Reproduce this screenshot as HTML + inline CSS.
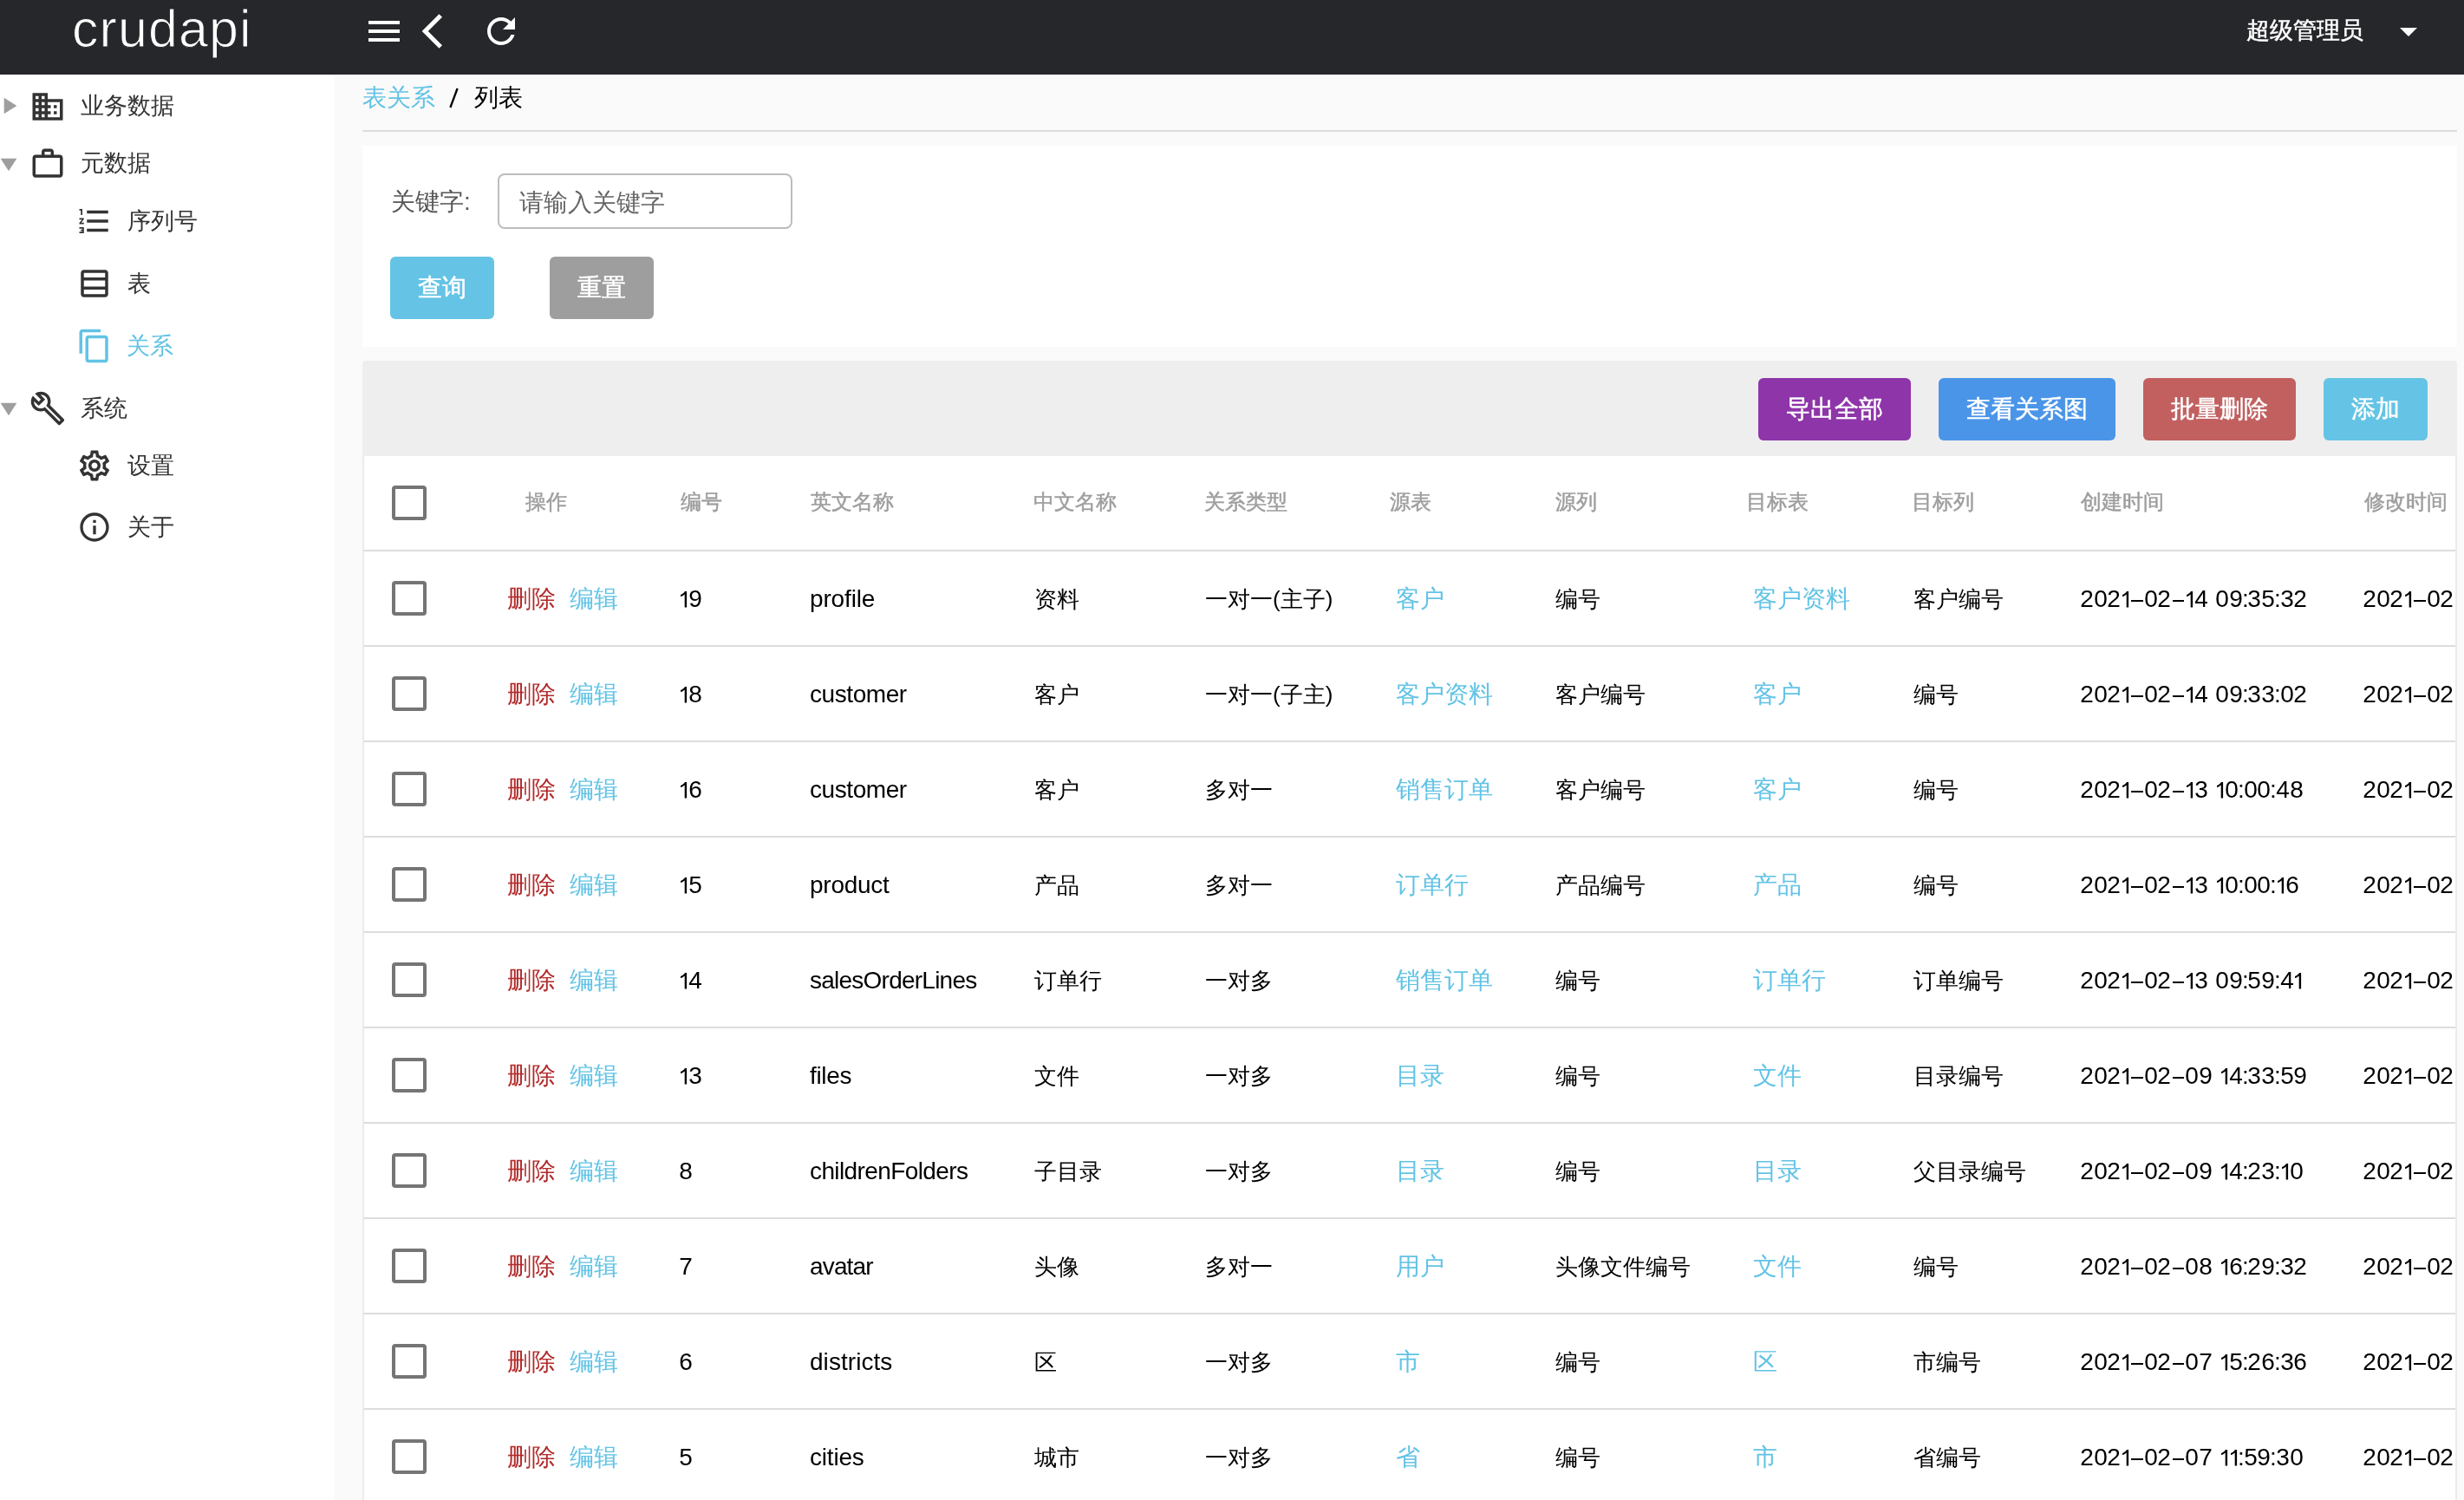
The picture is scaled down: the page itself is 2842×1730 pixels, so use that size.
<!DOCTYPE html>
<html><head><meta charset="utf-8"><style>
html,body{margin:0;padding:0;width:2842px;height:1730px;overflow:hidden;background:#fff}
body{position:relative;font-family:"Liberation Sans",sans-serif}
.t{position:absolute;white-space:nowrap;will-change:transform}
.ic{position:absolute;display:block}
.btn{position:absolute;will-change:transform;border-radius:6px;color:#fff;text-align:center;white-space:nowrap}
.cb{position:absolute;width:40px;height:40px;box-sizing:border-box;border:4px solid #757575;border-radius:4px}
</style></head><body>
<div style="position:absolute;left:0;top:0;width:2842px;height:86px;background:#26272b"></div>
<div class="t" style="left:82.5px;top:2.5px;font-size:61px;line-height:61px;color:#fff;font-weight:400;letter-spacing:1.1px;-webkit-text-stroke:1px #26272b">crudapi</div>
<svg class="ic" style="left:419px;top:12px;width:48px;height:48px" viewBox="0 0 24 24"><path fill="#fff" d="M3 18h18v-2H3v2zm0-5h18v-2H3v2zm0-7v2h18V6H3z"/></svg>
<svg class="ic" style="left:475px;top:12px;width:48px;height:48px" viewBox="0 0 24 24"><path fill="#fff" d="M17.51 3.87L15.73 2.1 5.84 12l9.9 9.9 1.77-1.77L9.38 12l8.13-8.13z"/></svg>
<svg class="ic" style="left:554px;top:12px;width:48px;height:48px" viewBox="0 0 24 24"><path fill="#fff" d="M17.65 6.35C16.2 4.9 14.21 4 12 4c-4.42 0-7.99 3.58-7.99 8s3.57 8 7.99 8c3.73 0 6.84-2.55 7.73-6h-2.08c-.82 2.33-3.04 4-5.65 4-3.31 0-6-2.69-6-6s2.69-6 6-6c1.66 0 3.14.69 4.22 1.78L13 11h7V4l-2.35 2.35z"/></svg>
<div class="t" style="left:2591px;top:22px;font-size:27px;line-height:27px;color:#fff;font-weight:400;-webkit-text-stroke:0.5px #fff">超级管理员</div>
<svg class="ic" style="left:2754px;top:12px;width:48px;height:48px" viewBox="0 0 24 24"><path fill="#fff" d="M7 10l5 5 5-5z"/></svg>
<div style="position:absolute;left:0;top:86px;width:386px;height:1644px;background:#fff"></div>
<div style="position:absolute;left:386px;top:86px;width:2456px;height:1644px;background:#fafafa"></div>
<svg class="ic" style="left:-6px;top:106px;width:32px;height:32px;transform:rotate(0deg)" viewBox="0 0 24 24"><path fill="#9e9e9e" d="M8 5v14l11-7z"/></svg>
<svg class="ic" style="left:34px;top:102px;width:42px;height:42px" viewBox="0 0 24 24"><path fill="#333333" d="M12 7V3H2v18h20V7H12zM6 19H4v-2h2v2zm0-4H4v-2h2v2zm0-4H4V9h2v2zm0-4H4V5h2v2zm4 12H8v-2h2v2zm0-4H8v-2h2v2zm0-4H8V9h2v2zm0-4H8V5h2v2zm10 12h-8v-2h2v-2h-2v-2h2v-2h-2V9h8v10zm-2-8h-2v2h2v-2zm0 4h-2v2h2v-2z"/></svg>
<div class="t" style="left:93px;top:108.35px;font-size:27.3px;line-height:27.3px;color:#333333;font-weight:400">业务数据</div>
<svg class="ic" style="left:-6px;top:172px;width:32px;height:32px;transform:rotate(90deg)" viewBox="0 0 24 24"><path fill="#9e9e9e" d="M8 5v14l11-7z"/></svg>
<svg class="ic" style="left:34px;top:168px;width:42px;height:42px" viewBox="0 0 24 24"><path fill="#333333" d="M14 6V4h-4v2h4zM4 8v11h16V8H4zm16-2c1.11 0 2 .89 2 2v11c0 1.11-.89 2-2 2H4c-1.11 0-2-.89-2-2l.01-11c0-1.11.88-2 1.99-2h4V4c0-1.11.89-2 2-2h4c1.11 0 2 .89 2 2v2h4z"/></svg>
<div class="t" style="left:93px;top:174.35px;font-size:27.3px;line-height:27.3px;color:#333333;font-weight:400">元数据</div>
<svg class="ic" style="left:88px;top:234px;width:42px;height:42px" viewBox="0 0 24 24"><path fill="#333333" d="M2 17h2v.5H3v1h1v.5H2v1h3v-4H2v1zm1-9h1V4H2v1h1v3zm-1 3h1.8L2 13.1v.9h3v-1H3.2L5 10.9V10H2v1zm5-6v2h14V5H7zm0 14h14v-2H7v2zm0-6h14v-2H7v2z"/></svg>
<div class="t" style="left:147px;top:241.35px;font-size:27.3px;line-height:27.3px;color:#333333;font-weight:400">序列号</div>
<svg class="ic" style="left:88px;top:305.5px;width:42px;height:42px" viewBox="0 0 24 24"><path fill="#333333" d="M19 3H5c-1.1 0-2 .9-2 2v14c0 1.1.9 2 2 2h14c1.1 0 2-.9 2-2V5c0-1.1-.9-2-2-2zm0 2v3H5V5h14zm0 5v4H5v-4h14zM5 19v-3h14v3H5z"/></svg>
<div class="t" style="left:147px;top:312.85px;font-size:27.3px;line-height:27.3px;color:#333333;font-weight:400">表</div>
<svg class="ic" style="left:88px;top:377.5px;width:42px;height:42px" viewBox="0 0 24 24"><path fill="#62c3e5" d="M16 1H4c-1.1 0-2 .9-2 2v14h2V3h12V1zm3 4H8c-1.1 0-2 .9-2 2v14c0 1.1.9 2 2 2h11c1.1 0 2-.9 2-2V7c0-1.1-.9-2-2-2zm0 16H8V7h11v14z"/></svg>
<div class="t" style="left:146px;top:384.85px;font-size:27.3px;line-height:27.3px;color:#62c3e5;font-weight:400">关系</div>
<svg class="ic" style="left:-6px;top:453.8px;width:32px;height:32px;transform:rotate(90deg)" viewBox="0 0 24 24"><path fill="#9e9e9e" d="M8 5v14l11-7z"/></svg>
<svg class="ic" style="left:34px;top:449.5px;width:42px;height:42px" viewBox="0 0 24 24"><path fill="#333333" d="M22.61 18.99l-9.08-9.08c.93-2.34.45-5.1-1.44-7C9.79.61 6.21.4 3.66 2.26L7.5 6.11 6.08 7.52 2.25 3.69C.39 6.23.6 9.82 2.9 12.11c1.86 1.86 4.57 2.35 6.89 1.48l9.11 9.11c.39.39 1.02.39 1.41 0l2.3-2.3c.4-.38.4-1.01 0-1.41zm-3 1.6l-9.46-9.46c-.61.45-1.29.72-2 .82-1.36.2-2.79-.21-3.83-1.25C3.37 9.76 2.93 8.5 3 7.26l3.09 3.09 4.24-4.24-3.08-3.09c1.24-.07 2.49.37 3.44 1.31 1.08 1.08 1.49 2.57 1.24 3.960-.12.71-.42 1.37-.88 1.96l9.45 9.45-.88.89z"/></svg>
<div class="t" style="left:93px;top:456.85px;font-size:27.3px;line-height:27.3px;color:#333333;font-weight:400">系统</div>
<svg class="ic" style="left:88px;top:515.5px;width:42px;height:42px" viewBox="0 0 24 24"><path fill="#333333" d="M19.43 12.98c.04-.32.07-.64.07-.98 0-.34-.03-.66-.07-.98l2.11-1.65c.19-.15.24-.42.12-.64l-2-3.46c-.09-.16-.26-.25-.44-.25-.06 0-.12.01-.17.03l-2.49 1c-.52-.4-1.08-.73-1.69-.98l-.38-2.650C14.46 2.18 14.25 2 14 2h-4c-.25 0-.46.18-.49.42l-.38 2.65c-.61.25-1.17.59-1.69.98l-2.49-1c-.06-.02-.12-.03-.18-.03-.17 0-.34.09-.43.25l-2 3.46c-.13.22-.07.49.12.64l2.11 1.65c-.04.32-.07.65-.07.98 0 .33.03.66.07.98l-2.11 1.65c-.19.15-.24.42-.12.64l2 3.46c.09.16.26.25.44.25.06 0 .12-.01.17-.03l2.49-1c.52.4 1.08.73 1.69.98l.38 2.65c.03.24.24.42.49.42h4c.25 0 .46-.18.49-.42l.38-2.65c.61-.25 1.17-.59 1.69-.98l2.49 1c.06.02.12.03.18.03.17 0 .34-.09.43-.25l2-3.46c.12-.22.07-.49-.12-.64l-2.11-1.65zm-1.98-1.71c.04.31.05.52.05.73 0 .21-.02.43-.05.73l-.14 1.13.89.7 1.08.84-.7 1.21-1.27-.51-1.04-.42-.9.68c-.43.32-.84.56-1.25.73l-1.06.43-.16 1.13-.2 1.35h-1.4l-.19-1.35-.16-1.13-1.06-.43c-.43-.18-.83-.41-1.23-.71l-.91-.7-1.06.43-1.27.51-.7-1.21 1.08-.84.89-.7-.14-1.13c-.03-.31-.05-.54-.05-.74s.02-.43.05-.73l.14-1.13-.89-.7-1.08-.84.7-1.21 1.27.51 1.04.42.9-.68c.43-.32.84-.56 1.25-.73l1.06-.43.16-1.13.2-1.35h1.39l.19 1.35.16 1.13 1.06.43c.43.18.83.41 1.23.71l.91.7 1.06-.43 1.27-.51.7 1.21-1.07.85-.89.7.14 1.13zM12 8c-2.21 0-4 1.790-4 4s1.79 4 4 4 4-1.79 4-4-1.79-4-4-4zm0 6c-1.1 0-2-.9-2-2s.9-2 2-2 2 .9 2 2-.9 2-2 2z"/></svg>
<div class="t" style="left:147px;top:522.85px;font-size:27.3px;line-height:27.3px;color:#333333;font-weight:400">设置</div>
<svg class="ic" style="left:89px;top:588px;width:40px;height:40px" viewBox="0 0 24 24"><path fill="#333333" d="M11 7h2v2h-2zm0 4h2v6h-2zm1-9C6.48 2 2 6.48 2 12s4.48 10 10 10 10-4.48 10-10S17.52 2 12 2zm0 18c-4.41 0-8-3.59-8-8s3.59-8 8-8 8 3.59 8 8-3.59 8-8 8z"/></svg>
<div class="t" style="left:147px;top:594.35px;font-size:27.3px;line-height:27.3px;color:#333333;font-weight:400">关于</div>
<div class="t" style="left:418px;top:99px;font-size:27.6px;line-height:27.6px;color:#62c3e5;font-weight:400">表关系</div>
<svg style="position:absolute;left:510px;top:95px;width:30px;height:35px" viewBox="510 95 30 35"><line x1="519.4" y1="124" x2="527.6" y2="102" stroke="#000" stroke-width="2.3"/></svg>
<div class="t" style="left:547px;top:99px;font-size:27.6px;line-height:27.6px;color:#000;font-weight:400">列表</div>
<div style="position:absolute;left:418px;top:150px;width:2416px;height:2px;background:#dddddd"></div>
<div style="position:absolute;left:418px;top:168px;width:2416px;height:232px;background:#fff"></div>
<div class="t" style="left:451px;top:219px;font-size:28px;line-height:28px;color:#555555;font-weight:400">关键字:</div>
<div style="position:absolute;left:574px;top:200px;width:340px;height:64px;box-sizing:border-box;border:2px solid #bdbdbd;border-radius:8px;background:#fff"></div>
<div class="t" style="left:599px;top:220px;font-size:28px;line-height:28px;color:#666666;font-weight:400">请输入关键字</div>
<div class="btn" style="left:450px;top:296px;width:120px;height:72px;background:#65c4e5;line-height:72px;font-size:28px;-webkit-text-stroke:0.5px #fff"><span style="position:relative;top:0px">查询</span></div>
<div class="btn" style="left:634px;top:296px;width:120px;height:72px;background:#9e9e9e;line-height:72px;font-size:28px;-webkit-text-stroke:0.5px #fff"><span style="position:relative;top:0px">重置</span></div>
<div style="position:absolute;left:418px;top:416px;width:2416px;height:110px;background:#eeeeee;border-radius:4px 4px 0 0"></div>
<div class="btn" style="left:2028px;top:436px;width:176px;height:72px;background:#8e35a9;line-height:72px;font-size:28px;-webkit-text-stroke:0.5px #fff"><span style="position:relative;top:0px">导出全部</span></div>
<div class="btn" style="left:2236px;top:436px;width:204px;height:72px;background:#4a95e8;line-height:72px;font-size:28px;-webkit-text-stroke:0.5px #fff"><span style="position:relative;top:0px">查看关系图</span></div>
<div class="btn" style="left:2472px;top:436px;width:176px;height:72px;background:#c26060;line-height:72px;font-size:28px;-webkit-text-stroke:0.5px #fff"><span style="position:relative;top:0px">批量删除</span></div>
<div class="btn" style="left:2680px;top:436px;width:120px;height:72px;background:#65c4e5;line-height:72px;font-size:28px;-webkit-text-stroke:0.5px #fff"><span style="position:relative;top:0px">添加</span></div>
<div style="position:absolute;left:418px;top:526px;width:2416px;height:1204px;background:#fff;overflow:hidden;box-sizing:border-box;border-left:2px solid #ebebeb;border-right:2px solid #ebebeb"><div id="tbl" style="position:absolute;left:-420px;top:-526px;width:2842px;height:1730px">
<div class="cb" style="left:452px;top:560px"></div>
<div class="t" style="left:606px;top:568.25px;font-size:23.5px;line-height:23.5px;color:#9e9e9e;font-weight:400;-webkit-text-stroke:0.5px #9e9e9e">操作</div>
<div class="t" style="left:785px;top:568.25px;font-size:23.5px;line-height:23.5px;color:#9e9e9e;font-weight:400;-webkit-text-stroke:0.5px #9e9e9e">编号</div>
<div class="t" style="left:935px;top:568.25px;font-size:23.5px;line-height:23.5px;color:#9e9e9e;font-weight:400;-webkit-text-stroke:0.5px #9e9e9e">英文名称</div>
<div class="t" style="left:1192px;top:568.25px;font-size:23.5px;line-height:23.5px;color:#9e9e9e;font-weight:400;-webkit-text-stroke:0.5px #9e9e9e">中文名称</div>
<div class="t" style="left:1389px;top:568.25px;font-size:23.5px;line-height:23.5px;color:#9e9e9e;font-weight:400;-webkit-text-stroke:0.5px #9e9e9e">关系类型</div>
<div class="t" style="left:1603px;top:568.25px;font-size:23.5px;line-height:23.5px;color:#9e9e9e;font-weight:400;-webkit-text-stroke:0.5px #9e9e9e">源表</div>
<div class="t" style="left:1794px;top:568.25px;font-size:23.5px;line-height:23.5px;color:#9e9e9e;font-weight:400;-webkit-text-stroke:0.5px #9e9e9e">源列</div>
<div class="t" style="left:2014px;top:568.25px;font-size:23.5px;line-height:23.5px;color:#9e9e9e;font-weight:400;-webkit-text-stroke:0.5px #9e9e9e">目标表</div>
<div class="t" style="left:2205px;top:568.25px;font-size:23.5px;line-height:23.5px;color:#9e9e9e;font-weight:400;-webkit-text-stroke:0.5px #9e9e9e">目标列</div>
<div class="t" style="left:2400px;top:568.25px;font-size:23.5px;line-height:23.5px;color:#9e9e9e;font-weight:400;-webkit-text-stroke:0.5px #9e9e9e">创建时间</div>
<div class="t" style="left:2727px;top:568.25px;font-size:23.5px;line-height:23.5px;color:#9e9e9e;font-weight:400;-webkit-text-stroke:0.5px #9e9e9e">修改时间</div>
<div style="position:absolute;left:418px;top:634px;width:2416px;height:2px;background:#dddddd"></div>
<div class="cb" style="left:452px;top:670px"></div>
<div class="t" style="left:585px;top:677px;font-size:28px;line-height:28px;color:#b22a2a;font-weight:400">删除</div>
<div class="t" style="left:657px;top:677px;font-size:28px;line-height:28px;color:#62c3e5;font-weight:400">编辑</div>
<svg style="position:absolute;left:785.46px;top:681.80px;width:7.3px;height:18.4px;overflow:visible" viewBox="0 0 7.3 18.4"><path fill="#000000" d="M7.1 0H5C4 1.9 2.4 3.1 0 3.9V6C1.9 5.5 3.4 4.6 4.7 3.4V18.4H7.1Z"/></svg>
<div class="t" style="left:782.26px;width:40px;text-align:center;top:677px;font-size:28px;line-height:28px;color:#000000">9</div>
<div class="t" style="left:933.5px;top:677px;font-size:28px;line-height:28px;color:#000000;font-weight:400;letter-spacing:-0.15px">profile</div>
<div class="t" style="left:1193px;top:678px;font-size:26px;line-height:26px;color:#000000;font-weight:400">资料</div>
<div class="t" style="left:1390px;top:678px;font-size:26px;line-height:26px;color:#000000;font-weight:400">一对一(主子)</div>
<div class="t" style="left:1610px;top:677px;font-size:28px;line-height:28px;color:#62c3e5;font-weight:400">客户</div>
<div class="t" style="left:1794px;top:678px;font-size:26px;line-height:26px;color:#000000;font-weight:400">编号</div>
<div class="t" style="left:2022px;top:677px;font-size:28px;line-height:28px;color:#62c3e5;font-weight:400">客户资料</div>
<div class="t" style="left:2207px;top:678px;font-size:26px;line-height:26px;color:#000000;font-weight:400">客户编号</div>
<div class="t" style="left:2387.43px;width:40px;text-align:center;top:677px;font-size:28px;line-height:28px;color:#000000">2</div>
<div class="t" style="left:2402.90px;width:40px;text-align:center;top:677px;font-size:28px;line-height:28px;color:#000000">0</div>
<div class="t" style="left:2418.37px;width:40px;text-align:center;top:677px;font-size:28px;line-height:28px;color:#000000">2</div>
<svg style="position:absolute;left:2447.87px;top:681.80px;width:7.3px;height:18.4px;overflow:visible" viewBox="0 0 7.3 18.4"><path fill="#000000" d="M7.1 0H5C4 1.9 2.4 3.1 0 3.9V6C1.9 5.5 3.4 4.6 4.7 3.4V18.4H7.1Z"/></svg>
<div style="position:absolute;left:2458.38px;top:692.40px;width:13.4px;height:1.8px;background:#000000"></div>
<div class="t" style="left:2460.96px;width:40px;text-align:center;top:677px;font-size:28px;line-height:28px;color:#000000">0</div>
<div class="t" style="left:2476.43px;width:40px;text-align:center;top:677px;font-size:28px;line-height:28px;color:#000000">2</div>
<div style="position:absolute;left:2505.62px;top:692.40px;width:13.4px;height:1.8px;background:#000000"></div>
<svg style="position:absolute;left:2522.23px;top:681.80px;width:7.3px;height:18.4px;overflow:visible" viewBox="0 0 7.3 18.4"><path fill="#000000" d="M7.1 0H5C4 1.9 2.4 3.1 0 3.9V6C1.9 5.5 3.4 4.6 4.7 3.4V18.4H7.1Z"/></svg>
<div class="t" style="left:2519.02px;width:40px;text-align:center;top:677px;font-size:28px;line-height:28px;color:#000000">4</div>
<div class="t" style="left:2543.04px;width:40px;text-align:center;top:677px;font-size:28px;line-height:28px;color:#000000">0</div>
<div class="t" style="left:2558.51px;width:40px;text-align:center;top:677px;font-size:28px;line-height:28px;color:#000000">9</div>
<div class="t" style="left:2569.50px;width:40px;text-align:center;top:677px;font-size:28px;line-height:28px;color:#000000">:</div>
<div class="t" style="left:2580.48px;width:40px;text-align:center;top:677px;font-size:28px;line-height:28px;color:#000000">3</div>
<div class="t" style="left:2595.95px;width:40px;text-align:center;top:677px;font-size:28px;line-height:28px;color:#000000">5</div>
<div class="t" style="left:2606.94px;width:40px;text-align:center;top:677px;font-size:28px;line-height:28px;color:#000000">:</div>
<div class="t" style="left:2617.92px;width:40px;text-align:center;top:677px;font-size:28px;line-height:28px;color:#000000">3</div>
<div class="t" style="left:2633.39px;width:40px;text-align:center;top:677px;font-size:28px;line-height:28px;color:#000000">2</div>
<div class="t" style="left:2713.43px;width:40px;text-align:center;top:677px;font-size:28px;line-height:28px;color:#000000">2</div>
<div class="t" style="left:2728.90px;width:40px;text-align:center;top:677px;font-size:28px;line-height:28px;color:#000000">0</div>
<div class="t" style="left:2744.37px;width:40px;text-align:center;top:677px;font-size:28px;line-height:28px;color:#000000">2</div>
<svg style="position:absolute;left:2773.87px;top:681.80px;width:7.3px;height:18.4px;overflow:visible" viewBox="0 0 7.3 18.4"><path fill="#000000" d="M7.1 0H5C4 1.9 2.4 3.1 0 3.9V6C1.9 5.5 3.4 4.6 4.7 3.4V18.4H7.1Z"/></svg>
<div style="position:absolute;left:2784.38px;top:692.40px;width:13.4px;height:1.8px;background:#000000"></div>
<div class="t" style="left:2786.96px;width:40px;text-align:center;top:677px;font-size:28px;line-height:28px;color:#000000">0</div>
<div class="t" style="left:2802.43px;width:40px;text-align:center;top:677px;font-size:28px;line-height:28px;color:#000000">2</div>
<div style="position:absolute;left:2831.62px;top:692.40px;width:13.4px;height:1.8px;background:#000000"></div>
<svg style="position:absolute;left:2848.23px;top:681.80px;width:7.3px;height:18.4px;overflow:visible" viewBox="0 0 7.3 18.4"><path fill="#000000" d="M7.1 0H5C4 1.9 2.4 3.1 0 3.9V6C1.9 5.5 3.4 4.6 4.7 3.4V18.4H7.1Z"/></svg>
<div class="t" style="left:2845.02px;width:40px;text-align:center;top:677px;font-size:28px;line-height:28px;color:#000000">4</div>
<div class="t" style="left:2869.04px;width:40px;text-align:center;top:677px;font-size:28px;line-height:28px;color:#000000">0</div>
<div class="t" style="left:2884.51px;width:40px;text-align:center;top:677px;font-size:28px;line-height:28px;color:#000000">9</div>
<div class="t" style="left:2895.50px;width:40px;text-align:center;top:677px;font-size:28px;line-height:28px;color:#000000">:</div>
<div class="t" style="left:2906.48px;width:40px;text-align:center;top:677px;font-size:28px;line-height:28px;color:#000000">3</div>
<div class="t" style="left:2921.95px;width:40px;text-align:center;top:677px;font-size:28px;line-height:28px;color:#000000">5</div>
<div class="t" style="left:2932.94px;width:40px;text-align:center;top:677px;font-size:28px;line-height:28px;color:#000000">:</div>
<div class="t" style="left:2943.92px;width:40px;text-align:center;top:677px;font-size:28px;line-height:28px;color:#000000">3</div>
<div class="t" style="left:2959.39px;width:40px;text-align:center;top:677px;font-size:28px;line-height:28px;color:#000000">2</div>
<div style="position:absolute;left:418px;top:744px;width:2416px;height:2px;background:#dddddd"></div>
<div class="cb" style="left:452px;top:780px"></div>
<div class="t" style="left:585px;top:787px;font-size:28px;line-height:28px;color:#b22a2a;font-weight:400">删除</div>
<div class="t" style="left:657px;top:787px;font-size:28px;line-height:28px;color:#62c3e5;font-weight:400">编辑</div>
<svg style="position:absolute;left:785.46px;top:791.80px;width:7.3px;height:18.4px;overflow:visible" viewBox="0 0 7.3 18.4"><path fill="#000000" d="M7.1 0H5C4 1.9 2.4 3.1 0 3.9V6C1.9 5.5 3.4 4.6 4.7 3.4V18.4H7.1Z"/></svg>
<div class="t" style="left:782.26px;width:40px;text-align:center;top:787px;font-size:28px;line-height:28px;color:#000000">8</div>
<div class="t" style="left:933.5px;top:787px;font-size:28px;line-height:28px;color:#000000;font-weight:400;letter-spacing:-0.43px">customer</div>
<div class="t" style="left:1193px;top:788px;font-size:26px;line-height:26px;color:#000000;font-weight:400">客户</div>
<div class="t" style="left:1390px;top:788px;font-size:26px;line-height:26px;color:#000000;font-weight:400">一对一(子主)</div>
<div class="t" style="left:1610px;top:787px;font-size:28px;line-height:28px;color:#62c3e5;font-weight:400">客户资料</div>
<div class="t" style="left:1794px;top:788px;font-size:26px;line-height:26px;color:#000000;font-weight:400">客户编号</div>
<div class="t" style="left:2022px;top:787px;font-size:28px;line-height:28px;color:#62c3e5;font-weight:400">客户</div>
<div class="t" style="left:2207px;top:788px;font-size:26px;line-height:26px;color:#000000;font-weight:400">编号</div>
<div class="t" style="left:2387.43px;width:40px;text-align:center;top:787px;font-size:28px;line-height:28px;color:#000000">2</div>
<div class="t" style="left:2402.90px;width:40px;text-align:center;top:787px;font-size:28px;line-height:28px;color:#000000">0</div>
<div class="t" style="left:2418.37px;width:40px;text-align:center;top:787px;font-size:28px;line-height:28px;color:#000000">2</div>
<svg style="position:absolute;left:2447.87px;top:791.80px;width:7.3px;height:18.4px;overflow:visible" viewBox="0 0 7.3 18.4"><path fill="#000000" d="M7.1 0H5C4 1.9 2.4 3.1 0 3.9V6C1.9 5.5 3.4 4.6 4.7 3.4V18.4H7.1Z"/></svg>
<div style="position:absolute;left:2458.38px;top:802.40px;width:13.4px;height:1.8px;background:#000000"></div>
<div class="t" style="left:2460.96px;width:40px;text-align:center;top:787px;font-size:28px;line-height:28px;color:#000000">0</div>
<div class="t" style="left:2476.43px;width:40px;text-align:center;top:787px;font-size:28px;line-height:28px;color:#000000">2</div>
<div style="position:absolute;left:2505.62px;top:802.40px;width:13.4px;height:1.8px;background:#000000"></div>
<svg style="position:absolute;left:2522.23px;top:791.80px;width:7.3px;height:18.4px;overflow:visible" viewBox="0 0 7.3 18.4"><path fill="#000000" d="M7.1 0H5C4 1.9 2.4 3.1 0 3.9V6C1.9 5.5 3.4 4.6 4.7 3.4V18.4H7.1Z"/></svg>
<div class="t" style="left:2519.02px;width:40px;text-align:center;top:787px;font-size:28px;line-height:28px;color:#000000">4</div>
<div class="t" style="left:2543.04px;width:40px;text-align:center;top:787px;font-size:28px;line-height:28px;color:#000000">0</div>
<div class="t" style="left:2558.51px;width:40px;text-align:center;top:787px;font-size:28px;line-height:28px;color:#000000">9</div>
<div class="t" style="left:2569.50px;width:40px;text-align:center;top:787px;font-size:28px;line-height:28px;color:#000000">:</div>
<div class="t" style="left:2580.48px;width:40px;text-align:center;top:787px;font-size:28px;line-height:28px;color:#000000">3</div>
<div class="t" style="left:2595.95px;width:40px;text-align:center;top:787px;font-size:28px;line-height:28px;color:#000000">3</div>
<div class="t" style="left:2606.94px;width:40px;text-align:center;top:787px;font-size:28px;line-height:28px;color:#000000">:</div>
<div class="t" style="left:2617.92px;width:40px;text-align:center;top:787px;font-size:28px;line-height:28px;color:#000000">0</div>
<div class="t" style="left:2633.39px;width:40px;text-align:center;top:787px;font-size:28px;line-height:28px;color:#000000">2</div>
<div class="t" style="left:2713.43px;width:40px;text-align:center;top:787px;font-size:28px;line-height:28px;color:#000000">2</div>
<div class="t" style="left:2728.90px;width:40px;text-align:center;top:787px;font-size:28px;line-height:28px;color:#000000">0</div>
<div class="t" style="left:2744.37px;width:40px;text-align:center;top:787px;font-size:28px;line-height:28px;color:#000000">2</div>
<svg style="position:absolute;left:2773.87px;top:791.80px;width:7.3px;height:18.4px;overflow:visible" viewBox="0 0 7.3 18.4"><path fill="#000000" d="M7.1 0H5C4 1.9 2.4 3.1 0 3.9V6C1.9 5.5 3.4 4.6 4.7 3.4V18.4H7.1Z"/></svg>
<div style="position:absolute;left:2784.38px;top:802.40px;width:13.4px;height:1.8px;background:#000000"></div>
<div class="t" style="left:2786.96px;width:40px;text-align:center;top:787px;font-size:28px;line-height:28px;color:#000000">0</div>
<div class="t" style="left:2802.43px;width:40px;text-align:center;top:787px;font-size:28px;line-height:28px;color:#000000">2</div>
<div style="position:absolute;left:2831.62px;top:802.40px;width:13.4px;height:1.8px;background:#000000"></div>
<svg style="position:absolute;left:2848.23px;top:791.80px;width:7.3px;height:18.4px;overflow:visible" viewBox="0 0 7.3 18.4"><path fill="#000000" d="M7.1 0H5C4 1.9 2.4 3.1 0 3.9V6C1.9 5.5 3.4 4.6 4.7 3.4V18.4H7.1Z"/></svg>
<div class="t" style="left:2845.02px;width:40px;text-align:center;top:787px;font-size:28px;line-height:28px;color:#000000">4</div>
<div class="t" style="left:2869.04px;width:40px;text-align:center;top:787px;font-size:28px;line-height:28px;color:#000000">0</div>
<div class="t" style="left:2884.51px;width:40px;text-align:center;top:787px;font-size:28px;line-height:28px;color:#000000">9</div>
<div class="t" style="left:2895.50px;width:40px;text-align:center;top:787px;font-size:28px;line-height:28px;color:#000000">:</div>
<div class="t" style="left:2906.48px;width:40px;text-align:center;top:787px;font-size:28px;line-height:28px;color:#000000">3</div>
<div class="t" style="left:2921.95px;width:40px;text-align:center;top:787px;font-size:28px;line-height:28px;color:#000000">3</div>
<div class="t" style="left:2932.94px;width:40px;text-align:center;top:787px;font-size:28px;line-height:28px;color:#000000">:</div>
<div class="t" style="left:2943.92px;width:40px;text-align:center;top:787px;font-size:28px;line-height:28px;color:#000000">0</div>
<div class="t" style="left:2959.39px;width:40px;text-align:center;top:787px;font-size:28px;line-height:28px;color:#000000">2</div>
<div style="position:absolute;left:418px;top:854px;width:2416px;height:2px;background:#dddddd"></div>
<div class="cb" style="left:452px;top:890px"></div>
<div class="t" style="left:585px;top:897px;font-size:28px;line-height:28px;color:#b22a2a;font-weight:400">删除</div>
<div class="t" style="left:657px;top:897px;font-size:28px;line-height:28px;color:#62c3e5;font-weight:400">编辑</div>
<svg style="position:absolute;left:785.46px;top:901.80px;width:7.3px;height:18.4px;overflow:visible" viewBox="0 0 7.3 18.4"><path fill="#000000" d="M7.1 0H5C4 1.9 2.4 3.1 0 3.9V6C1.9 5.5 3.4 4.6 4.7 3.4V18.4H7.1Z"/></svg>
<div class="t" style="left:782.26px;width:40px;text-align:center;top:897px;font-size:28px;line-height:28px;color:#000000">6</div>
<div class="t" style="left:933.5px;top:897px;font-size:28px;line-height:28px;color:#000000;font-weight:400;letter-spacing:-0.43px">customer</div>
<div class="t" style="left:1193px;top:898px;font-size:26px;line-height:26px;color:#000000;font-weight:400">客户</div>
<div class="t" style="left:1390px;top:898px;font-size:26px;line-height:26px;color:#000000;font-weight:400">多对一</div>
<div class="t" style="left:1610px;top:897px;font-size:28px;line-height:28px;color:#62c3e5;font-weight:400">销售订单</div>
<div class="t" style="left:1794px;top:898px;font-size:26px;line-height:26px;color:#000000;font-weight:400">客户编号</div>
<div class="t" style="left:2022px;top:897px;font-size:28px;line-height:28px;color:#62c3e5;font-weight:400">客户</div>
<div class="t" style="left:2207px;top:898px;font-size:26px;line-height:26px;color:#000000;font-weight:400">编号</div>
<div class="t" style="left:2387.43px;width:40px;text-align:center;top:897px;font-size:28px;line-height:28px;color:#000000">2</div>
<div class="t" style="left:2402.90px;width:40px;text-align:center;top:897px;font-size:28px;line-height:28px;color:#000000">0</div>
<div class="t" style="left:2418.37px;width:40px;text-align:center;top:897px;font-size:28px;line-height:28px;color:#000000">2</div>
<svg style="position:absolute;left:2447.87px;top:901.80px;width:7.3px;height:18.4px;overflow:visible" viewBox="0 0 7.3 18.4"><path fill="#000000" d="M7.1 0H5C4 1.9 2.4 3.1 0 3.9V6C1.9 5.5 3.4 4.6 4.7 3.4V18.4H7.1Z"/></svg>
<div style="position:absolute;left:2458.38px;top:912.40px;width:13.4px;height:1.8px;background:#000000"></div>
<div class="t" style="left:2460.96px;width:40px;text-align:center;top:897px;font-size:28px;line-height:28px;color:#000000">0</div>
<div class="t" style="left:2476.43px;width:40px;text-align:center;top:897px;font-size:28px;line-height:28px;color:#000000">2</div>
<div style="position:absolute;left:2505.62px;top:912.40px;width:13.4px;height:1.8px;background:#000000"></div>
<svg style="position:absolute;left:2522.23px;top:901.80px;width:7.3px;height:18.4px;overflow:visible" viewBox="0 0 7.3 18.4"><path fill="#000000" d="M7.1 0H5C4 1.9 2.4 3.1 0 3.9V6C1.9 5.5 3.4 4.6 4.7 3.4V18.4H7.1Z"/></svg>
<div class="t" style="left:2519.02px;width:40px;text-align:center;top:897px;font-size:28px;line-height:28px;color:#000000">3</div>
<svg style="position:absolute;left:2557.07px;top:901.80px;width:7.3px;height:18.4px;overflow:visible" viewBox="0 0 7.3 18.4"><path fill="#000000" d="M7.1 0H5C4 1.9 2.4 3.1 0 3.9V6C1.9 5.5 3.4 4.6 4.7 3.4V18.4H7.1Z"/></svg>
<div class="t" style="left:2553.86px;width:40px;text-align:center;top:897px;font-size:28px;line-height:28px;color:#000000">0</div>
<div class="t" style="left:2564.85px;width:40px;text-align:center;top:897px;font-size:28px;line-height:28px;color:#000000">:</div>
<div class="t" style="left:2575.83px;width:40px;text-align:center;top:897px;font-size:28px;line-height:28px;color:#000000">0</div>
<div class="t" style="left:2591.30px;width:40px;text-align:center;top:897px;font-size:28px;line-height:28px;color:#000000">0</div>
<div class="t" style="left:2602.29px;width:40px;text-align:center;top:897px;font-size:28px;line-height:28px;color:#000000">:</div>
<div class="t" style="left:2613.27px;width:40px;text-align:center;top:897px;font-size:28px;line-height:28px;color:#000000">4</div>
<div class="t" style="left:2628.74px;width:40px;text-align:center;top:897px;font-size:28px;line-height:28px;color:#000000">8</div>
<div class="t" style="left:2713.43px;width:40px;text-align:center;top:897px;font-size:28px;line-height:28px;color:#000000">2</div>
<div class="t" style="left:2728.90px;width:40px;text-align:center;top:897px;font-size:28px;line-height:28px;color:#000000">0</div>
<div class="t" style="left:2744.37px;width:40px;text-align:center;top:897px;font-size:28px;line-height:28px;color:#000000">2</div>
<svg style="position:absolute;left:2773.87px;top:901.80px;width:7.3px;height:18.4px;overflow:visible" viewBox="0 0 7.3 18.4"><path fill="#000000" d="M7.1 0H5C4 1.9 2.4 3.1 0 3.9V6C1.9 5.5 3.4 4.6 4.7 3.4V18.4H7.1Z"/></svg>
<div style="position:absolute;left:2784.38px;top:912.40px;width:13.4px;height:1.8px;background:#000000"></div>
<div class="t" style="left:2786.96px;width:40px;text-align:center;top:897px;font-size:28px;line-height:28px;color:#000000">0</div>
<div class="t" style="left:2802.43px;width:40px;text-align:center;top:897px;font-size:28px;line-height:28px;color:#000000">2</div>
<div style="position:absolute;left:2831.62px;top:912.40px;width:13.4px;height:1.8px;background:#000000"></div>
<svg style="position:absolute;left:2848.23px;top:901.80px;width:7.3px;height:18.4px;overflow:visible" viewBox="0 0 7.3 18.4"><path fill="#000000" d="M7.1 0H5C4 1.9 2.4 3.1 0 3.9V6C1.9 5.5 3.4 4.6 4.7 3.4V18.4H7.1Z"/></svg>
<div class="t" style="left:2845.02px;width:40px;text-align:center;top:897px;font-size:28px;line-height:28px;color:#000000">3</div>
<svg style="position:absolute;left:2883.07px;top:901.80px;width:7.3px;height:18.4px;overflow:visible" viewBox="0 0 7.3 18.4"><path fill="#000000" d="M7.1 0H5C4 1.9 2.4 3.1 0 3.9V6C1.9 5.5 3.4 4.6 4.7 3.4V18.4H7.1Z"/></svg>
<div class="t" style="left:2879.86px;width:40px;text-align:center;top:897px;font-size:28px;line-height:28px;color:#000000">0</div>
<div class="t" style="left:2890.85px;width:40px;text-align:center;top:897px;font-size:28px;line-height:28px;color:#000000">:</div>
<div class="t" style="left:2901.83px;width:40px;text-align:center;top:897px;font-size:28px;line-height:28px;color:#000000">0</div>
<div class="t" style="left:2917.30px;width:40px;text-align:center;top:897px;font-size:28px;line-height:28px;color:#000000">0</div>
<div class="t" style="left:2928.29px;width:40px;text-align:center;top:897px;font-size:28px;line-height:28px;color:#000000">:</div>
<div class="t" style="left:2939.27px;width:40px;text-align:center;top:897px;font-size:28px;line-height:28px;color:#000000">4</div>
<div class="t" style="left:2954.74px;width:40px;text-align:center;top:897px;font-size:28px;line-height:28px;color:#000000">8</div>
<div style="position:absolute;left:418px;top:964px;width:2416px;height:2px;background:#dddddd"></div>
<div class="cb" style="left:452px;top:1000px"></div>
<div class="t" style="left:585px;top:1007px;font-size:28px;line-height:28px;color:#b22a2a;font-weight:400">删除</div>
<div class="t" style="left:657px;top:1007px;font-size:28px;line-height:28px;color:#62c3e5;font-weight:400">编辑</div>
<svg style="position:absolute;left:785.46px;top:1011.80px;width:7.3px;height:18.4px;overflow:visible" viewBox="0 0 7.3 18.4"><path fill="#000000" d="M7.1 0H5C4 1.9 2.4 3.1 0 3.9V6C1.9 5.5 3.4 4.6 4.7 3.4V18.4H7.1Z"/></svg>
<div class="t" style="left:782.26px;width:40px;text-align:center;top:1007px;font-size:28px;line-height:28px;color:#000000">5</div>
<div class="t" style="left:933.5px;top:1007px;font-size:28px;line-height:28px;color:#000000;font-weight:400;letter-spacing:-0.25px">product</div>
<div class="t" style="left:1193px;top:1008px;font-size:26px;line-height:26px;color:#000000;font-weight:400">产品</div>
<div class="t" style="left:1390px;top:1008px;font-size:26px;line-height:26px;color:#000000;font-weight:400">多对一</div>
<div class="t" style="left:1610px;top:1007px;font-size:28px;line-height:28px;color:#62c3e5;font-weight:400">订单行</div>
<div class="t" style="left:1794px;top:1008px;font-size:26px;line-height:26px;color:#000000;font-weight:400">产品编号</div>
<div class="t" style="left:2022px;top:1007px;font-size:28px;line-height:28px;color:#62c3e5;font-weight:400">产品</div>
<div class="t" style="left:2207px;top:1008px;font-size:26px;line-height:26px;color:#000000;font-weight:400">编号</div>
<div class="t" style="left:2387.43px;width:40px;text-align:center;top:1007px;font-size:28px;line-height:28px;color:#000000">2</div>
<div class="t" style="left:2402.90px;width:40px;text-align:center;top:1007px;font-size:28px;line-height:28px;color:#000000">0</div>
<div class="t" style="left:2418.37px;width:40px;text-align:center;top:1007px;font-size:28px;line-height:28px;color:#000000">2</div>
<svg style="position:absolute;left:2447.87px;top:1011.80px;width:7.3px;height:18.4px;overflow:visible" viewBox="0 0 7.3 18.4"><path fill="#000000" d="M7.1 0H5C4 1.9 2.4 3.1 0 3.9V6C1.9 5.5 3.4 4.6 4.7 3.4V18.4H7.1Z"/></svg>
<div style="position:absolute;left:2458.38px;top:1022.40px;width:13.4px;height:1.8px;background:#000000"></div>
<div class="t" style="left:2460.96px;width:40px;text-align:center;top:1007px;font-size:28px;line-height:28px;color:#000000">0</div>
<div class="t" style="left:2476.43px;width:40px;text-align:center;top:1007px;font-size:28px;line-height:28px;color:#000000">2</div>
<div style="position:absolute;left:2505.62px;top:1022.40px;width:13.4px;height:1.8px;background:#000000"></div>
<svg style="position:absolute;left:2522.23px;top:1011.80px;width:7.3px;height:18.4px;overflow:visible" viewBox="0 0 7.3 18.4"><path fill="#000000" d="M7.1 0H5C4 1.9 2.4 3.1 0 3.9V6C1.9 5.5 3.4 4.6 4.7 3.4V18.4H7.1Z"/></svg>
<div class="t" style="left:2519.02px;width:40px;text-align:center;top:1007px;font-size:28px;line-height:28px;color:#000000">3</div>
<svg style="position:absolute;left:2557.07px;top:1011.80px;width:7.3px;height:18.4px;overflow:visible" viewBox="0 0 7.3 18.4"><path fill="#000000" d="M7.1 0H5C4 1.9 2.4 3.1 0 3.9V6C1.9 5.5 3.4 4.6 4.7 3.4V18.4H7.1Z"/></svg>
<div class="t" style="left:2553.86px;width:40px;text-align:center;top:1007px;font-size:28px;line-height:28px;color:#000000">0</div>
<div class="t" style="left:2564.85px;width:40px;text-align:center;top:1007px;font-size:28px;line-height:28px;color:#000000">:</div>
<div class="t" style="left:2575.83px;width:40px;text-align:center;top:1007px;font-size:28px;line-height:28px;color:#000000">0</div>
<div class="t" style="left:2591.30px;width:40px;text-align:center;top:1007px;font-size:28px;line-height:28px;color:#000000">0</div>
<div class="t" style="left:2602.29px;width:40px;text-align:center;top:1007px;font-size:28px;line-height:28px;color:#000000">:</div>
<svg style="position:absolute;left:2627.30px;top:1011.80px;width:7.3px;height:18.4px;overflow:visible" viewBox="0 0 7.3 18.4"><path fill="#000000" d="M7.1 0H5C4 1.9 2.4 3.1 0 3.9V6C1.9 5.5 3.4 4.6 4.7 3.4V18.4H7.1Z"/></svg>
<div class="t" style="left:2624.09px;width:40px;text-align:center;top:1007px;font-size:28px;line-height:28px;color:#000000">6</div>
<div class="t" style="left:2713.43px;width:40px;text-align:center;top:1007px;font-size:28px;line-height:28px;color:#000000">2</div>
<div class="t" style="left:2728.90px;width:40px;text-align:center;top:1007px;font-size:28px;line-height:28px;color:#000000">0</div>
<div class="t" style="left:2744.37px;width:40px;text-align:center;top:1007px;font-size:28px;line-height:28px;color:#000000">2</div>
<svg style="position:absolute;left:2773.87px;top:1011.80px;width:7.3px;height:18.4px;overflow:visible" viewBox="0 0 7.3 18.4"><path fill="#000000" d="M7.1 0H5C4 1.9 2.4 3.1 0 3.9V6C1.9 5.5 3.4 4.6 4.7 3.4V18.4H7.1Z"/></svg>
<div style="position:absolute;left:2784.38px;top:1022.40px;width:13.4px;height:1.8px;background:#000000"></div>
<div class="t" style="left:2786.96px;width:40px;text-align:center;top:1007px;font-size:28px;line-height:28px;color:#000000">0</div>
<div class="t" style="left:2802.43px;width:40px;text-align:center;top:1007px;font-size:28px;line-height:28px;color:#000000">2</div>
<div style="position:absolute;left:2831.62px;top:1022.40px;width:13.4px;height:1.8px;background:#000000"></div>
<svg style="position:absolute;left:2848.23px;top:1011.80px;width:7.3px;height:18.4px;overflow:visible" viewBox="0 0 7.3 18.4"><path fill="#000000" d="M7.1 0H5C4 1.9 2.4 3.1 0 3.9V6C1.9 5.5 3.4 4.6 4.7 3.4V18.4H7.1Z"/></svg>
<div class="t" style="left:2845.02px;width:40px;text-align:center;top:1007px;font-size:28px;line-height:28px;color:#000000">3</div>
<svg style="position:absolute;left:2883.07px;top:1011.80px;width:7.3px;height:18.4px;overflow:visible" viewBox="0 0 7.3 18.4"><path fill="#000000" d="M7.1 0H5C4 1.9 2.4 3.1 0 3.9V6C1.9 5.5 3.4 4.6 4.7 3.4V18.4H7.1Z"/></svg>
<div class="t" style="left:2879.86px;width:40px;text-align:center;top:1007px;font-size:28px;line-height:28px;color:#000000">0</div>
<div class="t" style="left:2890.85px;width:40px;text-align:center;top:1007px;font-size:28px;line-height:28px;color:#000000">:</div>
<div class="t" style="left:2901.83px;width:40px;text-align:center;top:1007px;font-size:28px;line-height:28px;color:#000000">0</div>
<div class="t" style="left:2917.30px;width:40px;text-align:center;top:1007px;font-size:28px;line-height:28px;color:#000000">0</div>
<div class="t" style="left:2928.29px;width:40px;text-align:center;top:1007px;font-size:28px;line-height:28px;color:#000000">:</div>
<svg style="position:absolute;left:2953.30px;top:1011.80px;width:7.3px;height:18.4px;overflow:visible" viewBox="0 0 7.3 18.4"><path fill="#000000" d="M7.1 0H5C4 1.9 2.4 3.1 0 3.9V6C1.9 5.5 3.4 4.6 4.7 3.4V18.4H7.1Z"/></svg>
<div class="t" style="left:2950.09px;width:40px;text-align:center;top:1007px;font-size:28px;line-height:28px;color:#000000">6</div>
<div style="position:absolute;left:418px;top:1074px;width:2416px;height:2px;background:#dddddd"></div>
<div class="cb" style="left:452px;top:1110px"></div>
<div class="t" style="left:585px;top:1117px;font-size:28px;line-height:28px;color:#b22a2a;font-weight:400">删除</div>
<div class="t" style="left:657px;top:1117px;font-size:28px;line-height:28px;color:#62c3e5;font-weight:400">编辑</div>
<svg style="position:absolute;left:785.46px;top:1121.80px;width:7.3px;height:18.4px;overflow:visible" viewBox="0 0 7.3 18.4"><path fill="#000000" d="M7.1 0H5C4 1.9 2.4 3.1 0 3.9V6C1.9 5.5 3.4 4.6 4.7 3.4V18.4H7.1Z"/></svg>
<div class="t" style="left:782.26px;width:40px;text-align:center;top:1117px;font-size:28px;line-height:28px;color:#000000">4</div>
<div class="t" style="left:933.5px;top:1117px;font-size:28px;line-height:28px;color:#000000;font-weight:400;letter-spacing:-0.76px">salesOrderLines</div>
<div class="t" style="left:1193px;top:1118px;font-size:26px;line-height:26px;color:#000000;font-weight:400">订单行</div>
<div class="t" style="left:1390px;top:1118px;font-size:26px;line-height:26px;color:#000000;font-weight:400">一对多</div>
<div class="t" style="left:1610px;top:1117px;font-size:28px;line-height:28px;color:#62c3e5;font-weight:400">销售订单</div>
<div class="t" style="left:1794px;top:1118px;font-size:26px;line-height:26px;color:#000000;font-weight:400">编号</div>
<div class="t" style="left:2022px;top:1117px;font-size:28px;line-height:28px;color:#62c3e5;font-weight:400">订单行</div>
<div class="t" style="left:2207px;top:1118px;font-size:26px;line-height:26px;color:#000000;font-weight:400">订单编号</div>
<div class="t" style="left:2387.43px;width:40px;text-align:center;top:1117px;font-size:28px;line-height:28px;color:#000000">2</div>
<div class="t" style="left:2402.90px;width:40px;text-align:center;top:1117px;font-size:28px;line-height:28px;color:#000000">0</div>
<div class="t" style="left:2418.37px;width:40px;text-align:center;top:1117px;font-size:28px;line-height:28px;color:#000000">2</div>
<svg style="position:absolute;left:2447.87px;top:1121.80px;width:7.3px;height:18.4px;overflow:visible" viewBox="0 0 7.3 18.4"><path fill="#000000" d="M7.1 0H5C4 1.9 2.4 3.1 0 3.9V6C1.9 5.5 3.4 4.6 4.7 3.4V18.4H7.1Z"/></svg>
<div style="position:absolute;left:2458.38px;top:1132.40px;width:13.4px;height:1.8px;background:#000000"></div>
<div class="t" style="left:2460.96px;width:40px;text-align:center;top:1117px;font-size:28px;line-height:28px;color:#000000">0</div>
<div class="t" style="left:2476.43px;width:40px;text-align:center;top:1117px;font-size:28px;line-height:28px;color:#000000">2</div>
<div style="position:absolute;left:2505.62px;top:1132.40px;width:13.4px;height:1.8px;background:#000000"></div>
<svg style="position:absolute;left:2522.23px;top:1121.80px;width:7.3px;height:18.4px;overflow:visible" viewBox="0 0 7.3 18.4"><path fill="#000000" d="M7.1 0H5C4 1.9 2.4 3.1 0 3.9V6C1.9 5.5 3.4 4.6 4.7 3.4V18.4H7.1Z"/></svg>
<div class="t" style="left:2519.02px;width:40px;text-align:center;top:1117px;font-size:28px;line-height:28px;color:#000000">3</div>
<div class="t" style="left:2543.04px;width:40px;text-align:center;top:1117px;font-size:28px;line-height:28px;color:#000000">0</div>
<div class="t" style="left:2558.51px;width:40px;text-align:center;top:1117px;font-size:28px;line-height:28px;color:#000000">9</div>
<div class="t" style="left:2569.50px;width:40px;text-align:center;top:1117px;font-size:28px;line-height:28px;color:#000000">:</div>
<div class="t" style="left:2580.48px;width:40px;text-align:center;top:1117px;font-size:28px;line-height:28px;color:#000000">5</div>
<div class="t" style="left:2595.95px;width:40px;text-align:center;top:1117px;font-size:28px;line-height:28px;color:#000000">9</div>
<div class="t" style="left:2606.94px;width:40px;text-align:center;top:1117px;font-size:28px;line-height:28px;color:#000000">:</div>
<div class="t" style="left:2617.92px;width:40px;text-align:center;top:1117px;font-size:28px;line-height:28px;color:#000000">4</div>
<svg style="position:absolute;left:2647.42px;top:1121.80px;width:7.3px;height:18.4px;overflow:visible" viewBox="0 0 7.3 18.4"><path fill="#000000" d="M7.1 0H5C4 1.9 2.4 3.1 0 3.9V6C1.9 5.5 3.4 4.6 4.7 3.4V18.4H7.1Z"/></svg>
<div class="t" style="left:2713.43px;width:40px;text-align:center;top:1117px;font-size:28px;line-height:28px;color:#000000">2</div>
<div class="t" style="left:2728.90px;width:40px;text-align:center;top:1117px;font-size:28px;line-height:28px;color:#000000">0</div>
<div class="t" style="left:2744.37px;width:40px;text-align:center;top:1117px;font-size:28px;line-height:28px;color:#000000">2</div>
<svg style="position:absolute;left:2773.87px;top:1121.80px;width:7.3px;height:18.4px;overflow:visible" viewBox="0 0 7.3 18.4"><path fill="#000000" d="M7.1 0H5C4 1.9 2.4 3.1 0 3.9V6C1.9 5.5 3.4 4.6 4.7 3.4V18.4H7.1Z"/></svg>
<div style="position:absolute;left:2784.38px;top:1132.40px;width:13.4px;height:1.8px;background:#000000"></div>
<div class="t" style="left:2786.96px;width:40px;text-align:center;top:1117px;font-size:28px;line-height:28px;color:#000000">0</div>
<div class="t" style="left:2802.43px;width:40px;text-align:center;top:1117px;font-size:28px;line-height:28px;color:#000000">2</div>
<div style="position:absolute;left:2831.62px;top:1132.40px;width:13.4px;height:1.8px;background:#000000"></div>
<svg style="position:absolute;left:2848.23px;top:1121.80px;width:7.3px;height:18.4px;overflow:visible" viewBox="0 0 7.3 18.4"><path fill="#000000" d="M7.1 0H5C4 1.9 2.4 3.1 0 3.9V6C1.9 5.5 3.4 4.6 4.7 3.4V18.4H7.1Z"/></svg>
<div class="t" style="left:2845.02px;width:40px;text-align:center;top:1117px;font-size:28px;line-height:28px;color:#000000">3</div>
<div class="t" style="left:2869.04px;width:40px;text-align:center;top:1117px;font-size:28px;line-height:28px;color:#000000">0</div>
<div class="t" style="left:2884.51px;width:40px;text-align:center;top:1117px;font-size:28px;line-height:28px;color:#000000">9</div>
<div class="t" style="left:2895.50px;width:40px;text-align:center;top:1117px;font-size:28px;line-height:28px;color:#000000">:</div>
<div class="t" style="left:2906.48px;width:40px;text-align:center;top:1117px;font-size:28px;line-height:28px;color:#000000">5</div>
<div class="t" style="left:2921.95px;width:40px;text-align:center;top:1117px;font-size:28px;line-height:28px;color:#000000">9</div>
<div class="t" style="left:2932.94px;width:40px;text-align:center;top:1117px;font-size:28px;line-height:28px;color:#000000">:</div>
<div class="t" style="left:2943.92px;width:40px;text-align:center;top:1117px;font-size:28px;line-height:28px;color:#000000">4</div>
<svg style="position:absolute;left:2973.42px;top:1121.80px;width:7.3px;height:18.4px;overflow:visible" viewBox="0 0 7.3 18.4"><path fill="#000000" d="M7.1 0H5C4 1.9 2.4 3.1 0 3.9V6C1.9 5.5 3.4 4.6 4.7 3.4V18.4H7.1Z"/></svg>
<div style="position:absolute;left:418px;top:1184px;width:2416px;height:2px;background:#dddddd"></div>
<div class="cb" style="left:452px;top:1220px"></div>
<div class="t" style="left:585px;top:1227px;font-size:28px;line-height:28px;color:#b22a2a;font-weight:400">删除</div>
<div class="t" style="left:657px;top:1227px;font-size:28px;line-height:28px;color:#62c3e5;font-weight:400">编辑</div>
<svg style="position:absolute;left:785.46px;top:1231.80px;width:7.3px;height:18.4px;overflow:visible" viewBox="0 0 7.3 18.4"><path fill="#000000" d="M7.1 0H5C4 1.9 2.4 3.1 0 3.9V6C1.9 5.5 3.4 4.6 4.7 3.4V18.4H7.1Z"/></svg>
<div class="t" style="left:782.26px;width:40px;text-align:center;top:1227px;font-size:28px;line-height:28px;color:#000000">3</div>
<div class="t" style="left:933.5px;top:1227px;font-size:28px;line-height:28px;color:#000000;font-weight:400;letter-spacing:-0.35px">files</div>
<div class="t" style="left:1193px;top:1228px;font-size:26px;line-height:26px;color:#000000;font-weight:400">文件</div>
<div class="t" style="left:1390px;top:1228px;font-size:26px;line-height:26px;color:#000000;font-weight:400">一对多</div>
<div class="t" style="left:1610px;top:1227px;font-size:28px;line-height:28px;color:#62c3e5;font-weight:400">目录</div>
<div class="t" style="left:1794px;top:1228px;font-size:26px;line-height:26px;color:#000000;font-weight:400">编号</div>
<div class="t" style="left:2022px;top:1227px;font-size:28px;line-height:28px;color:#62c3e5;font-weight:400">文件</div>
<div class="t" style="left:2207px;top:1228px;font-size:26px;line-height:26px;color:#000000;font-weight:400">目录编号</div>
<div class="t" style="left:2387.43px;width:40px;text-align:center;top:1227px;font-size:28px;line-height:28px;color:#000000">2</div>
<div class="t" style="left:2402.90px;width:40px;text-align:center;top:1227px;font-size:28px;line-height:28px;color:#000000">0</div>
<div class="t" style="left:2418.37px;width:40px;text-align:center;top:1227px;font-size:28px;line-height:28px;color:#000000">2</div>
<svg style="position:absolute;left:2447.87px;top:1231.80px;width:7.3px;height:18.4px;overflow:visible" viewBox="0 0 7.3 18.4"><path fill="#000000" d="M7.1 0H5C4 1.9 2.4 3.1 0 3.9V6C1.9 5.5 3.4 4.6 4.7 3.4V18.4H7.1Z"/></svg>
<div style="position:absolute;left:2458.38px;top:1242.40px;width:13.4px;height:1.8px;background:#000000"></div>
<div class="t" style="left:2460.96px;width:40px;text-align:center;top:1227px;font-size:28px;line-height:28px;color:#000000">0</div>
<div class="t" style="left:2476.43px;width:40px;text-align:center;top:1227px;font-size:28px;line-height:28px;color:#000000">2</div>
<div style="position:absolute;left:2505.62px;top:1242.40px;width:13.4px;height:1.8px;background:#000000"></div>
<div class="t" style="left:2508.20px;width:40px;text-align:center;top:1227px;font-size:28px;line-height:28px;color:#000000">0</div>
<div class="t" style="left:2523.67px;width:40px;text-align:center;top:1227px;font-size:28px;line-height:28px;color:#000000">9</div>
<svg style="position:absolute;left:2561.72px;top:1231.80px;width:7.3px;height:18.4px;overflow:visible" viewBox="0 0 7.3 18.4"><path fill="#000000" d="M7.1 0H5C4 1.9 2.4 3.1 0 3.9V6C1.9 5.5 3.4 4.6 4.7 3.4V18.4H7.1Z"/></svg>
<div class="t" style="left:2558.51px;width:40px;text-align:center;top:1227px;font-size:28px;line-height:28px;color:#000000">4</div>
<div class="t" style="left:2569.50px;width:40px;text-align:center;top:1227px;font-size:28px;line-height:28px;color:#000000">:</div>
<div class="t" style="left:2580.48px;width:40px;text-align:center;top:1227px;font-size:28px;line-height:28px;color:#000000">3</div>
<div class="t" style="left:2595.95px;width:40px;text-align:center;top:1227px;font-size:28px;line-height:28px;color:#000000">3</div>
<div class="t" style="left:2606.94px;width:40px;text-align:center;top:1227px;font-size:28px;line-height:28px;color:#000000">:</div>
<div class="t" style="left:2617.92px;width:40px;text-align:center;top:1227px;font-size:28px;line-height:28px;color:#000000">5</div>
<div class="t" style="left:2633.39px;width:40px;text-align:center;top:1227px;font-size:28px;line-height:28px;color:#000000">9</div>
<div class="t" style="left:2713.43px;width:40px;text-align:center;top:1227px;font-size:28px;line-height:28px;color:#000000">2</div>
<div class="t" style="left:2728.90px;width:40px;text-align:center;top:1227px;font-size:28px;line-height:28px;color:#000000">0</div>
<div class="t" style="left:2744.37px;width:40px;text-align:center;top:1227px;font-size:28px;line-height:28px;color:#000000">2</div>
<svg style="position:absolute;left:2773.87px;top:1231.80px;width:7.3px;height:18.4px;overflow:visible" viewBox="0 0 7.3 18.4"><path fill="#000000" d="M7.1 0H5C4 1.9 2.4 3.1 0 3.9V6C1.9 5.5 3.4 4.6 4.7 3.4V18.4H7.1Z"/></svg>
<div style="position:absolute;left:2784.38px;top:1242.40px;width:13.4px;height:1.8px;background:#000000"></div>
<div class="t" style="left:2786.96px;width:40px;text-align:center;top:1227px;font-size:28px;line-height:28px;color:#000000">0</div>
<div class="t" style="left:2802.43px;width:40px;text-align:center;top:1227px;font-size:28px;line-height:28px;color:#000000">2</div>
<div style="position:absolute;left:2831.62px;top:1242.40px;width:13.4px;height:1.8px;background:#000000"></div>
<div class="t" style="left:2834.20px;width:40px;text-align:center;top:1227px;font-size:28px;line-height:28px;color:#000000">0</div>
<div class="t" style="left:2849.67px;width:40px;text-align:center;top:1227px;font-size:28px;line-height:28px;color:#000000">9</div>
<svg style="position:absolute;left:2887.72px;top:1231.80px;width:7.3px;height:18.4px;overflow:visible" viewBox="0 0 7.3 18.4"><path fill="#000000" d="M7.1 0H5C4 1.9 2.4 3.1 0 3.9V6C1.9 5.5 3.4 4.6 4.7 3.4V18.4H7.1Z"/></svg>
<div class="t" style="left:2884.51px;width:40px;text-align:center;top:1227px;font-size:28px;line-height:28px;color:#000000">4</div>
<div class="t" style="left:2895.50px;width:40px;text-align:center;top:1227px;font-size:28px;line-height:28px;color:#000000">:</div>
<div class="t" style="left:2906.48px;width:40px;text-align:center;top:1227px;font-size:28px;line-height:28px;color:#000000">3</div>
<div class="t" style="left:2921.95px;width:40px;text-align:center;top:1227px;font-size:28px;line-height:28px;color:#000000">3</div>
<div class="t" style="left:2932.94px;width:40px;text-align:center;top:1227px;font-size:28px;line-height:28px;color:#000000">:</div>
<div class="t" style="left:2943.92px;width:40px;text-align:center;top:1227px;font-size:28px;line-height:28px;color:#000000">5</div>
<div class="t" style="left:2959.39px;width:40px;text-align:center;top:1227px;font-size:28px;line-height:28px;color:#000000">9</div>
<div style="position:absolute;left:418px;top:1294px;width:2416px;height:2px;background:#dddddd"></div>
<div class="cb" style="left:452px;top:1330px"></div>
<div class="t" style="left:585px;top:1337px;font-size:28px;line-height:28px;color:#b22a2a;font-weight:400">删除</div>
<div class="t" style="left:657px;top:1337px;font-size:28px;line-height:28px;color:#62c3e5;font-weight:400">编辑</div>
<div class="t" style="left:771.44px;width:40px;text-align:center;top:1337px;font-size:28px;line-height:28px;color:#000000">8</div>
<div class="t" style="left:933.5px;top:1337px;font-size:28px;line-height:28px;color:#000000;font-weight:400;letter-spacing:-0.61px">childrenFolders</div>
<div class="t" style="left:1193px;top:1338px;font-size:26px;line-height:26px;color:#000000;font-weight:400">子目录</div>
<div class="t" style="left:1390px;top:1338px;font-size:26px;line-height:26px;color:#000000;font-weight:400">一对多</div>
<div class="t" style="left:1610px;top:1337px;font-size:28px;line-height:28px;color:#62c3e5;font-weight:400">目录</div>
<div class="t" style="left:1794px;top:1338px;font-size:26px;line-height:26px;color:#000000;font-weight:400">编号</div>
<div class="t" style="left:2022px;top:1337px;font-size:28px;line-height:28px;color:#62c3e5;font-weight:400">目录</div>
<div class="t" style="left:2207px;top:1338px;font-size:26px;line-height:26px;color:#000000;font-weight:400">父目录编号</div>
<div class="t" style="left:2387.43px;width:40px;text-align:center;top:1337px;font-size:28px;line-height:28px;color:#000000">2</div>
<div class="t" style="left:2402.90px;width:40px;text-align:center;top:1337px;font-size:28px;line-height:28px;color:#000000">0</div>
<div class="t" style="left:2418.37px;width:40px;text-align:center;top:1337px;font-size:28px;line-height:28px;color:#000000">2</div>
<svg style="position:absolute;left:2447.87px;top:1341.80px;width:7.3px;height:18.4px;overflow:visible" viewBox="0 0 7.3 18.4"><path fill="#000000" d="M7.1 0H5C4 1.9 2.4 3.1 0 3.9V6C1.9 5.5 3.4 4.6 4.7 3.4V18.4H7.1Z"/></svg>
<div style="position:absolute;left:2458.38px;top:1352.40px;width:13.4px;height:1.8px;background:#000000"></div>
<div class="t" style="left:2460.96px;width:40px;text-align:center;top:1337px;font-size:28px;line-height:28px;color:#000000">0</div>
<div class="t" style="left:2476.43px;width:40px;text-align:center;top:1337px;font-size:28px;line-height:28px;color:#000000">2</div>
<div style="position:absolute;left:2505.62px;top:1352.40px;width:13.4px;height:1.8px;background:#000000"></div>
<div class="t" style="left:2508.20px;width:40px;text-align:center;top:1337px;font-size:28px;line-height:28px;color:#000000">0</div>
<div class="t" style="left:2523.67px;width:40px;text-align:center;top:1337px;font-size:28px;line-height:28px;color:#000000">9</div>
<svg style="position:absolute;left:2561.72px;top:1341.80px;width:7.3px;height:18.4px;overflow:visible" viewBox="0 0 7.3 18.4"><path fill="#000000" d="M7.1 0H5C4 1.9 2.4 3.1 0 3.9V6C1.9 5.5 3.4 4.6 4.7 3.4V18.4H7.1Z"/></svg>
<div class="t" style="left:2558.51px;width:40px;text-align:center;top:1337px;font-size:28px;line-height:28px;color:#000000">4</div>
<div class="t" style="left:2569.50px;width:40px;text-align:center;top:1337px;font-size:28px;line-height:28px;color:#000000">:</div>
<div class="t" style="left:2580.48px;width:40px;text-align:center;top:1337px;font-size:28px;line-height:28px;color:#000000">2</div>
<div class="t" style="left:2595.95px;width:40px;text-align:center;top:1337px;font-size:28px;line-height:28px;color:#000000">3</div>
<div class="t" style="left:2606.94px;width:40px;text-align:center;top:1337px;font-size:28px;line-height:28px;color:#000000">:</div>
<svg style="position:absolute;left:2631.95px;top:1341.80px;width:7.3px;height:18.4px;overflow:visible" viewBox="0 0 7.3 18.4"><path fill="#000000" d="M7.1 0H5C4 1.9 2.4 3.1 0 3.9V6C1.9 5.5 3.4 4.6 4.7 3.4V18.4H7.1Z"/></svg>
<div class="t" style="left:2628.74px;width:40px;text-align:center;top:1337px;font-size:28px;line-height:28px;color:#000000">0</div>
<div class="t" style="left:2713.43px;width:40px;text-align:center;top:1337px;font-size:28px;line-height:28px;color:#000000">2</div>
<div class="t" style="left:2728.90px;width:40px;text-align:center;top:1337px;font-size:28px;line-height:28px;color:#000000">0</div>
<div class="t" style="left:2744.37px;width:40px;text-align:center;top:1337px;font-size:28px;line-height:28px;color:#000000">2</div>
<svg style="position:absolute;left:2773.87px;top:1341.80px;width:7.3px;height:18.4px;overflow:visible" viewBox="0 0 7.3 18.4"><path fill="#000000" d="M7.1 0H5C4 1.9 2.4 3.1 0 3.9V6C1.9 5.5 3.4 4.6 4.7 3.4V18.4H7.1Z"/></svg>
<div style="position:absolute;left:2784.38px;top:1352.40px;width:13.4px;height:1.8px;background:#000000"></div>
<div class="t" style="left:2786.96px;width:40px;text-align:center;top:1337px;font-size:28px;line-height:28px;color:#000000">0</div>
<div class="t" style="left:2802.43px;width:40px;text-align:center;top:1337px;font-size:28px;line-height:28px;color:#000000">2</div>
<div style="position:absolute;left:2831.62px;top:1352.40px;width:13.4px;height:1.8px;background:#000000"></div>
<div class="t" style="left:2834.20px;width:40px;text-align:center;top:1337px;font-size:28px;line-height:28px;color:#000000">0</div>
<div class="t" style="left:2849.67px;width:40px;text-align:center;top:1337px;font-size:28px;line-height:28px;color:#000000">9</div>
<svg style="position:absolute;left:2887.72px;top:1341.80px;width:7.3px;height:18.4px;overflow:visible" viewBox="0 0 7.3 18.4"><path fill="#000000" d="M7.1 0H5C4 1.9 2.4 3.1 0 3.9V6C1.9 5.5 3.4 4.6 4.7 3.4V18.4H7.1Z"/></svg>
<div class="t" style="left:2884.51px;width:40px;text-align:center;top:1337px;font-size:28px;line-height:28px;color:#000000">4</div>
<div class="t" style="left:2895.50px;width:40px;text-align:center;top:1337px;font-size:28px;line-height:28px;color:#000000">:</div>
<div class="t" style="left:2906.48px;width:40px;text-align:center;top:1337px;font-size:28px;line-height:28px;color:#000000">2</div>
<div class="t" style="left:2921.95px;width:40px;text-align:center;top:1337px;font-size:28px;line-height:28px;color:#000000">3</div>
<div class="t" style="left:2932.94px;width:40px;text-align:center;top:1337px;font-size:28px;line-height:28px;color:#000000">:</div>
<svg style="position:absolute;left:2957.95px;top:1341.80px;width:7.3px;height:18.4px;overflow:visible" viewBox="0 0 7.3 18.4"><path fill="#000000" d="M7.1 0H5C4 1.9 2.4 3.1 0 3.9V6C1.9 5.5 3.4 4.6 4.7 3.4V18.4H7.1Z"/></svg>
<div class="t" style="left:2954.74px;width:40px;text-align:center;top:1337px;font-size:28px;line-height:28px;color:#000000">0</div>
<div style="position:absolute;left:418px;top:1404px;width:2416px;height:2px;background:#dddddd"></div>
<div class="cb" style="left:452px;top:1440px"></div>
<div class="t" style="left:585px;top:1447px;font-size:28px;line-height:28px;color:#b22a2a;font-weight:400">删除</div>
<div class="t" style="left:657px;top:1447px;font-size:28px;line-height:28px;color:#62c3e5;font-weight:400">编辑</div>
<div class="t" style="left:771.44px;width:40px;text-align:center;top:1447px;font-size:28px;line-height:28px;color:#000000">7</div>
<div class="t" style="left:933.5px;top:1447px;font-size:28px;line-height:28px;color:#000000;font-weight:400;letter-spacing:-0.84px">avatar</div>
<div class="t" style="left:1193px;top:1448px;font-size:26px;line-height:26px;color:#000000;font-weight:400">头像</div>
<div class="t" style="left:1390px;top:1448px;font-size:26px;line-height:26px;color:#000000;font-weight:400">多对一</div>
<div class="t" style="left:1610px;top:1447px;font-size:28px;line-height:28px;color:#62c3e5;font-weight:400">用户</div>
<div class="t" style="left:1794px;top:1448px;font-size:26px;line-height:26px;color:#000000;font-weight:400">头像文件编号</div>
<div class="t" style="left:2022px;top:1447px;font-size:28px;line-height:28px;color:#62c3e5;font-weight:400">文件</div>
<div class="t" style="left:2207px;top:1448px;font-size:26px;line-height:26px;color:#000000;font-weight:400">编号</div>
<div class="t" style="left:2387.43px;width:40px;text-align:center;top:1447px;font-size:28px;line-height:28px;color:#000000">2</div>
<div class="t" style="left:2402.90px;width:40px;text-align:center;top:1447px;font-size:28px;line-height:28px;color:#000000">0</div>
<div class="t" style="left:2418.37px;width:40px;text-align:center;top:1447px;font-size:28px;line-height:28px;color:#000000">2</div>
<svg style="position:absolute;left:2447.87px;top:1451.80px;width:7.3px;height:18.4px;overflow:visible" viewBox="0 0 7.3 18.4"><path fill="#000000" d="M7.1 0H5C4 1.9 2.4 3.1 0 3.9V6C1.9 5.5 3.4 4.6 4.7 3.4V18.4H7.1Z"/></svg>
<div style="position:absolute;left:2458.38px;top:1462.40px;width:13.4px;height:1.8px;background:#000000"></div>
<div class="t" style="left:2460.96px;width:40px;text-align:center;top:1447px;font-size:28px;line-height:28px;color:#000000">0</div>
<div class="t" style="left:2476.43px;width:40px;text-align:center;top:1447px;font-size:28px;line-height:28px;color:#000000">2</div>
<div style="position:absolute;left:2505.62px;top:1462.40px;width:13.4px;height:1.8px;background:#000000"></div>
<div class="t" style="left:2508.20px;width:40px;text-align:center;top:1447px;font-size:28px;line-height:28px;color:#000000">0</div>
<div class="t" style="left:2523.67px;width:40px;text-align:center;top:1447px;font-size:28px;line-height:28px;color:#000000">8</div>
<svg style="position:absolute;left:2561.72px;top:1451.80px;width:7.3px;height:18.4px;overflow:visible" viewBox="0 0 7.3 18.4"><path fill="#000000" d="M7.1 0H5C4 1.9 2.4 3.1 0 3.9V6C1.9 5.5 3.4 4.6 4.7 3.4V18.4H7.1Z"/></svg>
<div class="t" style="left:2558.51px;width:40px;text-align:center;top:1447px;font-size:28px;line-height:28px;color:#000000">6</div>
<div class="t" style="left:2569.50px;width:40px;text-align:center;top:1447px;font-size:28px;line-height:28px;color:#000000">:</div>
<div class="t" style="left:2580.48px;width:40px;text-align:center;top:1447px;font-size:28px;line-height:28px;color:#000000">2</div>
<div class="t" style="left:2595.95px;width:40px;text-align:center;top:1447px;font-size:28px;line-height:28px;color:#000000">9</div>
<div class="t" style="left:2606.94px;width:40px;text-align:center;top:1447px;font-size:28px;line-height:28px;color:#000000">:</div>
<div class="t" style="left:2617.92px;width:40px;text-align:center;top:1447px;font-size:28px;line-height:28px;color:#000000">3</div>
<div class="t" style="left:2633.39px;width:40px;text-align:center;top:1447px;font-size:28px;line-height:28px;color:#000000">2</div>
<div class="t" style="left:2713.43px;width:40px;text-align:center;top:1447px;font-size:28px;line-height:28px;color:#000000">2</div>
<div class="t" style="left:2728.90px;width:40px;text-align:center;top:1447px;font-size:28px;line-height:28px;color:#000000">0</div>
<div class="t" style="left:2744.37px;width:40px;text-align:center;top:1447px;font-size:28px;line-height:28px;color:#000000">2</div>
<svg style="position:absolute;left:2773.87px;top:1451.80px;width:7.3px;height:18.4px;overflow:visible" viewBox="0 0 7.3 18.4"><path fill="#000000" d="M7.1 0H5C4 1.9 2.4 3.1 0 3.9V6C1.9 5.5 3.4 4.6 4.7 3.4V18.4H7.1Z"/></svg>
<div style="position:absolute;left:2784.38px;top:1462.40px;width:13.4px;height:1.8px;background:#000000"></div>
<div class="t" style="left:2786.96px;width:40px;text-align:center;top:1447px;font-size:28px;line-height:28px;color:#000000">0</div>
<div class="t" style="left:2802.43px;width:40px;text-align:center;top:1447px;font-size:28px;line-height:28px;color:#000000">2</div>
<div style="position:absolute;left:2831.62px;top:1462.40px;width:13.4px;height:1.8px;background:#000000"></div>
<div class="t" style="left:2834.20px;width:40px;text-align:center;top:1447px;font-size:28px;line-height:28px;color:#000000">0</div>
<div class="t" style="left:2849.67px;width:40px;text-align:center;top:1447px;font-size:28px;line-height:28px;color:#000000">8</div>
<svg style="position:absolute;left:2887.72px;top:1451.80px;width:7.3px;height:18.4px;overflow:visible" viewBox="0 0 7.3 18.4"><path fill="#000000" d="M7.1 0H5C4 1.9 2.4 3.1 0 3.9V6C1.9 5.5 3.4 4.6 4.7 3.4V18.4H7.1Z"/></svg>
<div class="t" style="left:2884.51px;width:40px;text-align:center;top:1447px;font-size:28px;line-height:28px;color:#000000">6</div>
<div class="t" style="left:2895.50px;width:40px;text-align:center;top:1447px;font-size:28px;line-height:28px;color:#000000">:</div>
<div class="t" style="left:2906.48px;width:40px;text-align:center;top:1447px;font-size:28px;line-height:28px;color:#000000">2</div>
<div class="t" style="left:2921.95px;width:40px;text-align:center;top:1447px;font-size:28px;line-height:28px;color:#000000">9</div>
<div class="t" style="left:2932.94px;width:40px;text-align:center;top:1447px;font-size:28px;line-height:28px;color:#000000">:</div>
<div class="t" style="left:2943.92px;width:40px;text-align:center;top:1447px;font-size:28px;line-height:28px;color:#000000">3</div>
<div class="t" style="left:2959.39px;width:40px;text-align:center;top:1447px;font-size:28px;line-height:28px;color:#000000">2</div>
<div style="position:absolute;left:418px;top:1514px;width:2416px;height:2px;background:#dddddd"></div>
<div class="cb" style="left:452px;top:1550px"></div>
<div class="t" style="left:585px;top:1557px;font-size:28px;line-height:28px;color:#b22a2a;font-weight:400">删除</div>
<div class="t" style="left:657px;top:1557px;font-size:28px;line-height:28px;color:#62c3e5;font-weight:400">编辑</div>
<div class="t" style="left:771.44px;width:40px;text-align:center;top:1557px;font-size:28px;line-height:28px;color:#000000">6</div>
<div class="t" style="left:933.5px;top:1557px;font-size:28px;line-height:28px;color:#000000;font-weight:400;letter-spacing:0.05px">districts</div>
<div class="t" style="left:1193px;top:1558px;font-size:26px;line-height:26px;color:#000000;font-weight:400">区</div>
<div class="t" style="left:1390px;top:1558px;font-size:26px;line-height:26px;color:#000000;font-weight:400">一对多</div>
<div class="t" style="left:1610px;top:1557px;font-size:28px;line-height:28px;color:#62c3e5;font-weight:400">市</div>
<div class="t" style="left:1794px;top:1558px;font-size:26px;line-height:26px;color:#000000;font-weight:400">编号</div>
<div class="t" style="left:2022px;top:1557px;font-size:28px;line-height:28px;color:#62c3e5;font-weight:400">区</div>
<div class="t" style="left:2207px;top:1558px;font-size:26px;line-height:26px;color:#000000;font-weight:400">市编号</div>
<div class="t" style="left:2387.43px;width:40px;text-align:center;top:1557px;font-size:28px;line-height:28px;color:#000000">2</div>
<div class="t" style="left:2402.90px;width:40px;text-align:center;top:1557px;font-size:28px;line-height:28px;color:#000000">0</div>
<div class="t" style="left:2418.37px;width:40px;text-align:center;top:1557px;font-size:28px;line-height:28px;color:#000000">2</div>
<svg style="position:absolute;left:2447.87px;top:1561.80px;width:7.3px;height:18.4px;overflow:visible" viewBox="0 0 7.3 18.4"><path fill="#000000" d="M7.1 0H5C4 1.9 2.4 3.1 0 3.9V6C1.9 5.5 3.4 4.6 4.7 3.4V18.4H7.1Z"/></svg>
<div style="position:absolute;left:2458.38px;top:1572.40px;width:13.4px;height:1.8px;background:#000000"></div>
<div class="t" style="left:2460.96px;width:40px;text-align:center;top:1557px;font-size:28px;line-height:28px;color:#000000">0</div>
<div class="t" style="left:2476.43px;width:40px;text-align:center;top:1557px;font-size:28px;line-height:28px;color:#000000">2</div>
<div style="position:absolute;left:2505.62px;top:1572.40px;width:13.4px;height:1.8px;background:#000000"></div>
<div class="t" style="left:2508.20px;width:40px;text-align:center;top:1557px;font-size:28px;line-height:28px;color:#000000">0</div>
<div class="t" style="left:2523.67px;width:40px;text-align:center;top:1557px;font-size:28px;line-height:28px;color:#000000">7</div>
<svg style="position:absolute;left:2561.72px;top:1561.80px;width:7.3px;height:18.4px;overflow:visible" viewBox="0 0 7.3 18.4"><path fill="#000000" d="M7.1 0H5C4 1.9 2.4 3.1 0 3.9V6C1.9 5.5 3.4 4.6 4.7 3.4V18.4H7.1Z"/></svg>
<div class="t" style="left:2558.51px;width:40px;text-align:center;top:1557px;font-size:28px;line-height:28px;color:#000000">5</div>
<div class="t" style="left:2569.50px;width:40px;text-align:center;top:1557px;font-size:28px;line-height:28px;color:#000000">:</div>
<div class="t" style="left:2580.48px;width:40px;text-align:center;top:1557px;font-size:28px;line-height:28px;color:#000000">2</div>
<div class="t" style="left:2595.95px;width:40px;text-align:center;top:1557px;font-size:28px;line-height:28px;color:#000000">6</div>
<div class="t" style="left:2606.94px;width:40px;text-align:center;top:1557px;font-size:28px;line-height:28px;color:#000000">:</div>
<div class="t" style="left:2617.92px;width:40px;text-align:center;top:1557px;font-size:28px;line-height:28px;color:#000000">3</div>
<div class="t" style="left:2633.39px;width:40px;text-align:center;top:1557px;font-size:28px;line-height:28px;color:#000000">6</div>
<div class="t" style="left:2713.43px;width:40px;text-align:center;top:1557px;font-size:28px;line-height:28px;color:#000000">2</div>
<div class="t" style="left:2728.90px;width:40px;text-align:center;top:1557px;font-size:28px;line-height:28px;color:#000000">0</div>
<div class="t" style="left:2744.37px;width:40px;text-align:center;top:1557px;font-size:28px;line-height:28px;color:#000000">2</div>
<svg style="position:absolute;left:2773.87px;top:1561.80px;width:7.3px;height:18.4px;overflow:visible" viewBox="0 0 7.3 18.4"><path fill="#000000" d="M7.1 0H5C4 1.9 2.4 3.1 0 3.9V6C1.9 5.5 3.4 4.6 4.7 3.4V18.4H7.1Z"/></svg>
<div style="position:absolute;left:2784.38px;top:1572.40px;width:13.4px;height:1.8px;background:#000000"></div>
<div class="t" style="left:2786.96px;width:40px;text-align:center;top:1557px;font-size:28px;line-height:28px;color:#000000">0</div>
<div class="t" style="left:2802.43px;width:40px;text-align:center;top:1557px;font-size:28px;line-height:28px;color:#000000">2</div>
<div style="position:absolute;left:2831.62px;top:1572.40px;width:13.4px;height:1.8px;background:#000000"></div>
<div class="t" style="left:2834.20px;width:40px;text-align:center;top:1557px;font-size:28px;line-height:28px;color:#000000">0</div>
<div class="t" style="left:2849.67px;width:40px;text-align:center;top:1557px;font-size:28px;line-height:28px;color:#000000">7</div>
<svg style="position:absolute;left:2887.72px;top:1561.80px;width:7.3px;height:18.4px;overflow:visible" viewBox="0 0 7.3 18.4"><path fill="#000000" d="M7.1 0H5C4 1.9 2.4 3.1 0 3.9V6C1.9 5.5 3.4 4.6 4.7 3.4V18.4H7.1Z"/></svg>
<div class="t" style="left:2884.51px;width:40px;text-align:center;top:1557px;font-size:28px;line-height:28px;color:#000000">5</div>
<div class="t" style="left:2895.50px;width:40px;text-align:center;top:1557px;font-size:28px;line-height:28px;color:#000000">:</div>
<div class="t" style="left:2906.48px;width:40px;text-align:center;top:1557px;font-size:28px;line-height:28px;color:#000000">2</div>
<div class="t" style="left:2921.95px;width:40px;text-align:center;top:1557px;font-size:28px;line-height:28px;color:#000000">6</div>
<div class="t" style="left:2932.94px;width:40px;text-align:center;top:1557px;font-size:28px;line-height:28px;color:#000000">:</div>
<div class="t" style="left:2943.92px;width:40px;text-align:center;top:1557px;font-size:28px;line-height:28px;color:#000000">3</div>
<div class="t" style="left:2959.39px;width:40px;text-align:center;top:1557px;font-size:28px;line-height:28px;color:#000000">6</div>
<div style="position:absolute;left:418px;top:1624px;width:2416px;height:2px;background:#dddddd"></div>
<div class="cb" style="left:452px;top:1660px"></div>
<div class="t" style="left:585px;top:1667px;font-size:28px;line-height:28px;color:#b22a2a;font-weight:400">删除</div>
<div class="t" style="left:657px;top:1667px;font-size:28px;line-height:28px;color:#62c3e5;font-weight:400">编辑</div>
<div class="t" style="left:771.44px;width:40px;text-align:center;top:1667px;font-size:28px;line-height:28px;color:#000000">5</div>
<div class="t" style="left:933.5px;top:1667px;font-size:28px;line-height:28px;color:#000000;font-weight:400;letter-spacing:-0.2px">cities</div>
<div class="t" style="left:1193px;top:1668px;font-size:26px;line-height:26px;color:#000000;font-weight:400">城市</div>
<div class="t" style="left:1390px;top:1668px;font-size:26px;line-height:26px;color:#000000;font-weight:400">一对多</div>
<div class="t" style="left:1610px;top:1667px;font-size:28px;line-height:28px;color:#62c3e5;font-weight:400">省</div>
<div class="t" style="left:1794px;top:1668px;font-size:26px;line-height:26px;color:#000000;font-weight:400">编号</div>
<div class="t" style="left:2022px;top:1667px;font-size:28px;line-height:28px;color:#62c3e5;font-weight:400">市</div>
<div class="t" style="left:2207px;top:1668px;font-size:26px;line-height:26px;color:#000000;font-weight:400">省编号</div>
<div class="t" style="left:2387.43px;width:40px;text-align:center;top:1667px;font-size:28px;line-height:28px;color:#000000">2</div>
<div class="t" style="left:2402.90px;width:40px;text-align:center;top:1667px;font-size:28px;line-height:28px;color:#000000">0</div>
<div class="t" style="left:2418.37px;width:40px;text-align:center;top:1667px;font-size:28px;line-height:28px;color:#000000">2</div>
<svg style="position:absolute;left:2447.87px;top:1671.80px;width:7.3px;height:18.4px;overflow:visible" viewBox="0 0 7.3 18.4"><path fill="#000000" d="M7.1 0H5C4 1.9 2.4 3.1 0 3.9V6C1.9 5.5 3.4 4.6 4.7 3.4V18.4H7.1Z"/></svg>
<div style="position:absolute;left:2458.38px;top:1682.40px;width:13.4px;height:1.8px;background:#000000"></div>
<div class="t" style="left:2460.96px;width:40px;text-align:center;top:1667px;font-size:28px;line-height:28px;color:#000000">0</div>
<div class="t" style="left:2476.43px;width:40px;text-align:center;top:1667px;font-size:28px;line-height:28px;color:#000000">2</div>
<div style="position:absolute;left:2505.62px;top:1682.40px;width:13.4px;height:1.8px;background:#000000"></div>
<div class="t" style="left:2508.20px;width:40px;text-align:center;top:1667px;font-size:28px;line-height:28px;color:#000000">0</div>
<div class="t" style="left:2523.67px;width:40px;text-align:center;top:1667px;font-size:28px;line-height:28px;color:#000000">7</div>
<svg style="position:absolute;left:2561.72px;top:1671.80px;width:7.3px;height:18.4px;overflow:visible" viewBox="0 0 7.3 18.4"><path fill="#000000" d="M7.1 0H5C4 1.9 2.4 3.1 0 3.9V6C1.9 5.5 3.4 4.6 4.7 3.4V18.4H7.1Z"/></svg>
<svg style="position:absolute;left:2572.54px;top:1671.80px;width:7.3px;height:18.4px;overflow:visible" viewBox="0 0 7.3 18.4"><path fill="#000000" d="M7.1 0H5C4 1.9 2.4 3.1 0 3.9V6C1.9 5.5 3.4 4.6 4.7 3.4V18.4H7.1Z"/></svg>
<div class="t" style="left:2564.85px;width:40px;text-align:center;top:1667px;font-size:28px;line-height:28px;color:#000000">:</div>
<div class="t" style="left:2575.83px;width:40px;text-align:center;top:1667px;font-size:28px;line-height:28px;color:#000000">5</div>
<div class="t" style="left:2591.30px;width:40px;text-align:center;top:1667px;font-size:28px;line-height:28px;color:#000000">9</div>
<div class="t" style="left:2602.29px;width:40px;text-align:center;top:1667px;font-size:28px;line-height:28px;color:#000000">:</div>
<div class="t" style="left:2613.27px;width:40px;text-align:center;top:1667px;font-size:28px;line-height:28px;color:#000000">3</div>
<div class="t" style="left:2628.74px;width:40px;text-align:center;top:1667px;font-size:28px;line-height:28px;color:#000000">0</div>
<div class="t" style="left:2713.43px;width:40px;text-align:center;top:1667px;font-size:28px;line-height:28px;color:#000000">2</div>
<div class="t" style="left:2728.90px;width:40px;text-align:center;top:1667px;font-size:28px;line-height:28px;color:#000000">0</div>
<div class="t" style="left:2744.37px;width:40px;text-align:center;top:1667px;font-size:28px;line-height:28px;color:#000000">2</div>
<svg style="position:absolute;left:2773.87px;top:1671.80px;width:7.3px;height:18.4px;overflow:visible" viewBox="0 0 7.3 18.4"><path fill="#000000" d="M7.1 0H5C4 1.9 2.4 3.1 0 3.9V6C1.9 5.5 3.4 4.6 4.7 3.4V18.4H7.1Z"/></svg>
<div style="position:absolute;left:2784.38px;top:1682.40px;width:13.4px;height:1.8px;background:#000000"></div>
<div class="t" style="left:2786.96px;width:40px;text-align:center;top:1667px;font-size:28px;line-height:28px;color:#000000">0</div>
<div class="t" style="left:2802.43px;width:40px;text-align:center;top:1667px;font-size:28px;line-height:28px;color:#000000">2</div>
<div style="position:absolute;left:2831.62px;top:1682.40px;width:13.4px;height:1.8px;background:#000000"></div>
<div class="t" style="left:2834.20px;width:40px;text-align:center;top:1667px;font-size:28px;line-height:28px;color:#000000">0</div>
<div class="t" style="left:2849.67px;width:40px;text-align:center;top:1667px;font-size:28px;line-height:28px;color:#000000">7</div>
<svg style="position:absolute;left:2887.72px;top:1671.80px;width:7.3px;height:18.4px;overflow:visible" viewBox="0 0 7.3 18.4"><path fill="#000000" d="M7.1 0H5C4 1.9 2.4 3.1 0 3.9V6C1.9 5.5 3.4 4.6 4.7 3.4V18.4H7.1Z"/></svg>
<svg style="position:absolute;left:2898.54px;top:1671.80px;width:7.3px;height:18.4px;overflow:visible" viewBox="0 0 7.3 18.4"><path fill="#000000" d="M7.1 0H5C4 1.9 2.4 3.1 0 3.9V6C1.9 5.5 3.4 4.6 4.7 3.4V18.4H7.1Z"/></svg>
<div class="t" style="left:2890.85px;width:40px;text-align:center;top:1667px;font-size:28px;line-height:28px;color:#000000">:</div>
<div class="t" style="left:2901.83px;width:40px;text-align:center;top:1667px;font-size:28px;line-height:28px;color:#000000">5</div>
<div class="t" style="left:2917.30px;width:40px;text-align:center;top:1667px;font-size:28px;line-height:28px;color:#000000">9</div>
<div class="t" style="left:2928.29px;width:40px;text-align:center;top:1667px;font-size:28px;line-height:28px;color:#000000">:</div>
<div class="t" style="left:2939.27px;width:40px;text-align:center;top:1667px;font-size:28px;line-height:28px;color:#000000">3</div>
<div class="t" style="left:2954.74px;width:40px;text-align:center;top:1667px;font-size:28px;line-height:28px;color:#000000">0</div>
<div style="position:absolute;left:418px;top:1734px;width:2416px;height:2px;background:#dddddd"></div>
</div></div>
</body></html>
